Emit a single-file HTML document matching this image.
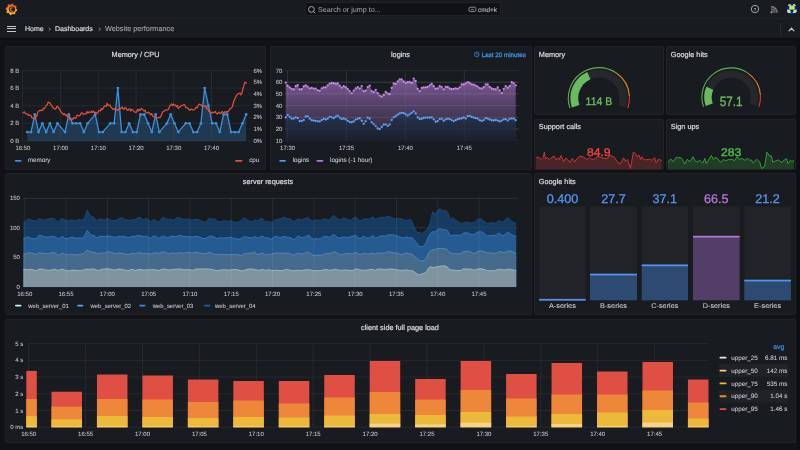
<!DOCTYPE html><html><head><meta charset="utf-8"><style>
*{margin:0;padding:0;box-sizing:border-box}
html,body{width:800px;height:450px;overflow:hidden;background:#111217;text-rendering:geometricPrecision;font-family:"Liberation Sans",sans-serif;color:#ccccdc}
.abs{position:absolute}
.panel{position:absolute;background:#181b1f;border:1px solid #202226;border-radius:2px}
.t{position:absolute;white-space:nowrap;line-height:1}
.ptitle{font-size:7px;color:#d8d9e0}
.ax{font-size:5.5px;color:#c0c1c8}
.lg{font-size:6px;color:#c8c9d0}
svg{position:absolute;left:0;top:0;overflow:visible;will-change:transform}
.t{will-change:transform}
</style></head><body><div class="abs" style="left:0;top:0;width:800px;height:19px;background:#181b1f;border-bottom:1px solid #202227"></div>
<div class="abs" style="left:0;top:19px;width:800px;height:20px;background:#181b1f;border-bottom:1px solid #0c0d10"></div>
<div class="abs" style="left:0;top:39px;width:800px;height:1px;background:#0e0f12"></div>
<svg width="24" height="19" viewBox="0 0 24 19" style="left:0;top:0">
<defs><linearGradient id="lg1" x1="0" y1="-5.5" x2="0" y2="5.5" gradientUnits="userSpaceOnUse"><stop offset="0" stop-color="#ef4a2a"/><stop offset="0.55" stop-color="#f7922a"/><stop offset="1" stop-color="#fcd114"/></linearGradient></defs>
<g transform="translate(11.5,9.4)" fill="url(#lg1)">
<circle r="4.9"/><circle cx="0.82" cy="-4.68" r="1.15"/><circle cx="3.89" cy="-2.72" r="1.15"/><circle cx="4.68" cy="0.82" r="1.15"/><circle cx="2.72" cy="3.89" r="1.15"/><circle cx="-0.82" cy="4.68" r="1.15"/><circle cx="-3.89" cy="2.72" r="1.15"/><circle cx="-4.68" cy="-0.82" r="1.15"/><circle cx="-2.72" cy="-3.89" r="1.15"/>
<circle cx="0.5" cy="0.2" r="3.0" fill="#1d1b1c"/>
<path d="M1.1,-1.4 A1.7,1.7 0 1 0 1.9,1.4" stroke="#ef7a2a" stroke-width="1.1" fill="none"/>
<circle cx="0.9" cy="0.3" r="0.75" fill="#141316"/>
</g></svg>
<div class="abs" style="left:7px;top:25.7px;width:9px;height:1px;background:#c8c9d0"></div>
<div class="abs" style="left:7px;top:28.2px;width:9px;height:1px;background:#c8c9d0"></div>
<div class="abs" style="left:7px;top:30.7px;width:9px;height:1px;background:#c8c9d0"></div>
<div class="t" style="left:25px;top:25.9px;font-size:7px;color:#d8d9e0;-webkit-text-stroke:0.2px #d8d9e0">Home</div>
<svg width="800" height="40"><path d="M48.6,27.8 L50.7,29.25 L48.6,30.7 M98.6,27.8 L100.7,29.25 L98.6,30.7" stroke="#8e8f96" stroke-width="0.8" fill="none"/></svg>
<div class="t" style="left:55.1px;top:25.9px;font-size:7px;color:#d8d9e0;-webkit-text-stroke:0.2px #d8d9e0">Dashboards</div>
<div class="t" style="left:105.3px;top:25.4px;font-size:7.3px;color:#a3a4ab;-webkit-text-stroke:0.1px #a3a4ab">Website performance</div>
<div class="abs" style="left:304.5px;top:1.9px;width:196.3px;height:14.4px;background:#111217;border:1px solid #1f2126;border-radius:2px"></div>
<svg width="10" height="10" style="left:307px;top:4.6px"><circle cx="4.4" cy="4.4" r="2.9" stroke="#b5b6bd" stroke-width="0.9" fill="none"/><path d="M6.5,6.5 L8.3,8.3" stroke="#b5b6bd" stroke-width="0.9"/></svg>
<div class="t" style="left:318px;top:6px;font-size:7.2px;color:#a8a9b0">Search or jump to...</div>
<svg width="10" height="8" style="left:467.5px;top:6px"><rect x="1" y="1.2" width="6.8" height="4.3" rx="1.3" stroke="#9a9ba2" stroke-width="0.9" fill="none"/><path d="M3,3.6 h2.8" stroke="#9a9ba2" stroke-width="0.8"/></svg>
<div class="t" style="left:477.6px;top:7.8px;font-size:6.4px;color:#b0b1b8;-webkit-text-stroke:0.15px #b0b1b8">cmd+k</div>
<svg width="12" height="12" style="left:749px;top:2.9px"><circle cx="6" cy="6" r="3.7" stroke="#b8b9c0" stroke-width="0.85" fill="none"/><text x="6" y="7.5" font-size="4.2" text-anchor="middle" fill="#b8b9c0" font-family="Liberation Sans" font-weight="bold">?</text></svg>
<svg width="12" height="12" style="left:768px;top:3px"><path d="M3,9.7 L3,2.8 A6.9,6.9 0 0 1 9.9,9.7 Z" fill="#6f7077"/><path d="M3,7 A2.7,2.7 0 0 1 5.7,9.7 M3,5 A4.7,4.7 0 0 1 7.7,9.7" stroke="#181b1f" stroke-width="0.7" fill="none"/><circle cx="3.3" cy="9.4" r="0.9" fill="#9a9ba2"/></svg>
<svg width="13" height="13" style="left:786.1px;top:2.9px"><defs><clipPath id="avc"><circle cx="5.9" cy="6.1" r="5.7"/></clipPath></defs><circle cx="5.9" cy="6.1" r="5.7" fill="#0a1f8c"/><g clip-path="url(#avc)" fill="#c8ec70"><rect x="1.9" y="0.6" width="2.7" height="2.2"/><rect x="7.2" y="0.6" width="2.7" height="2.2"/><rect x="3.3" y="2.5" width="5.3" height="4.1"/><rect x="1.1" y="6.6" width="3.1" height="3.1"/><rect x="7.6" y="6.6" width="3.1" height="3.1"/><rect x="2.4" y="8.5" width="2.5" height="1.5"/><rect x="6.8" y="8.5" width="2.5" height="1.5"/></g><rect x="4.9" y="3.6" width="2" height="2" fill="#b4d878"/></svg>
<div class="abs" style="left:780px;top:23px;width:1.2px;height:11.6px;background:#2a2c31"></div>
<svg width="10" height="8" style="left:786.5px;top:26px"><path d="M2.1,4.8 L4.5,2.2 L6.9,4.8" stroke="#c8c9d0" stroke-width="1.2" fill="none" stroke-linecap="round"/></svg>
<div class="panel" style="left:4.6px;top:45.6px;width:261.9px;height:124.4px"></div>
<div class="panel" style="left:269.5px;top:45.6px;width:262.1px;height:124.4px"></div>
<div class="panel" style="left:534.2px;top:45.6px;width:129.6px;height:69.9px"></div>
<div class="panel" style="left:666.4px;top:45.6px;width:129.6px;height:69.9px"></div>
<div class="panel" style="left:534.2px;top:118.5px;width:129.6px;height:51.5px"></div>
<div class="panel" style="left:666.4px;top:118.5px;width:129.6px;height:51.5px"></div>
<div class="panel" style="left:4.6px;top:172.6px;width:527px;height:142.9px"></div>
<div class="panel" style="left:534.2px;top:172.6px;width:261.8px;height:142.9px"></div>
<div class="panel" style="left:4.6px;top:318.6px;width:791.4px;height:124.4px"></div>
<div class="abs" style="left:797px;top:39px;width:3px;height:411px;background:#0e0f12"></div>
<svg width="800" height="450" font-family="Liberation Sans"><text x="135.5" y="56.5" font-size="7.3" fill="#d8d9e0" stroke="#d8d9e0" stroke-width="0.22" text-anchor="middle" font-weight="normal" >Memory / CPU</text><path d="M22.4,70.5 H247" stroke="#2b2d32" stroke-width="0.8"/><text x="19.3" y="72.5" font-size="6" fill="#bfc0c7" stroke="#bfc0c7" stroke-width="0.08" text-anchor="end" font-weight="normal" >8 B</text><path d="M22.4,88.1 H247" stroke="#2b2d32" stroke-width="0.8"/><text x="19.3" y="90.1" font-size="6" fill="#bfc0c7" stroke="#bfc0c7" stroke-width="0.08" text-anchor="end" font-weight="normal" >6 B</text><path d="M22.4,105.7 H247" stroke="#2b2d32" stroke-width="0.8"/><text x="19.3" y="107.7" font-size="6" fill="#bfc0c7" stroke="#bfc0c7" stroke-width="0.08" text-anchor="end" font-weight="normal" >4 B</text><path d="M22.4,123.3 H247" stroke="#2b2d32" stroke-width="0.8"/><text x="19.3" y="125.3" font-size="6" fill="#bfc0c7" stroke="#bfc0c7" stroke-width="0.08" text-anchor="end" font-weight="normal" >2 B</text><path d="M22.4,140.9 H247" stroke="#2b2d32" stroke-width="0.8"/><text x="19.3" y="142.9" font-size="6" fill="#bfc0c7" stroke="#bfc0c7" stroke-width="0.08" text-anchor="end" font-weight="normal" >0 B</text><text x="253.4" y="72.5" font-size="6" fill="#bfc0c7" stroke="#bfc0c7" stroke-width="0.08" text-anchor="start" font-weight="normal" >6%</text><path d="M248.4,70.5 H250.6" stroke="#2b2d32" stroke-width="0.8"/><text x="253.4" y="84.23" font-size="6" fill="#bfc0c7" stroke="#bfc0c7" stroke-width="0.08" text-anchor="start" font-weight="normal" >5%</text><path d="M248.4,82.23 H250.6" stroke="#2b2d32" stroke-width="0.8"/><text x="253.4" y="95.97" font-size="6" fill="#bfc0c7" stroke="#bfc0c7" stroke-width="0.08" text-anchor="start" font-weight="normal" >4%</text><path d="M248.4,93.97 H250.6" stroke="#2b2d32" stroke-width="0.8"/><text x="253.4" y="107.7" font-size="6" fill="#bfc0c7" stroke="#bfc0c7" stroke-width="0.08" text-anchor="start" font-weight="normal" >3%</text><path d="M248.4,105.7 H250.6" stroke="#2b2d32" stroke-width="0.8"/><text x="253.4" y="119.43" font-size="6" fill="#bfc0c7" stroke="#bfc0c7" stroke-width="0.08" text-anchor="start" font-weight="normal" >2%</text><path d="M248.4,117.43 H250.6" stroke="#2b2d32" stroke-width="0.8"/><text x="253.4" y="131.17" font-size="6" fill="#bfc0c7" stroke="#bfc0c7" stroke-width="0.08" text-anchor="start" font-weight="normal" >1%</text><path d="M248.4,129.17 H250.6" stroke="#2b2d32" stroke-width="0.8"/><text x="253.4" y="142.9" font-size="6" fill="#bfc0c7" stroke="#bfc0c7" stroke-width="0.08" text-anchor="start" font-weight="normal" >0%</text><path d="M248.4,140.9 H250.6" stroke="#2b2d32" stroke-width="0.8"/><text x="22.9" y="149.6" font-size="6" fill="#bfc0c7" stroke="#bfc0c7" stroke-width="0.08" text-anchor="middle" font-weight="normal" >16:50</text><path d="M60.62,70.5 V140.9" stroke="#2b2d32" stroke-width="0.8"/><text x="60.62" y="149.6" font-size="6" fill="#bfc0c7" stroke="#bfc0c7" stroke-width="0.08" text-anchor="middle" font-weight="normal" >17:00</text><path d="M98.34,70.5 V140.9" stroke="#2b2d32" stroke-width="0.8"/><text x="98.34" y="149.6" font-size="6" fill="#bfc0c7" stroke="#bfc0c7" stroke-width="0.08" text-anchor="middle" font-weight="normal" >17:10</text><path d="M136.06,70.5 V140.9" stroke="#2b2d32" stroke-width="0.8"/><text x="136.06" y="149.6" font-size="6" fill="#bfc0c7" stroke="#bfc0c7" stroke-width="0.08" text-anchor="middle" font-weight="normal" >17:20</text><path d="M173.78,70.5 V140.9" stroke="#2b2d32" stroke-width="0.8"/><text x="173.78" y="149.6" font-size="6" fill="#bfc0c7" stroke="#bfc0c7" stroke-width="0.08" text-anchor="middle" font-weight="normal" >17:30</text><path d="M211.5,70.5 V140.9" stroke="#2b2d32" stroke-width="0.8"/><text x="211.5" y="149.6" font-size="6" fill="#bfc0c7" stroke="#bfc0c7" stroke-width="0.08" text-anchor="middle" font-weight="normal" >17:40</text><path d="M22.4,70.5 V140.9" stroke="#2b2d32" stroke-width="0.8"/><path d="M27.25,132.1 L31.02,132.1 L34.8,114.5 L38.58,132.1 L42.35,123.3 L46.12,132.1 L49.9,123.3 L53.67,132.1 L57.45,123.3 L61.23,127.7 L65,132.1 L68.78,114.5 L72.55,123.3 L76.32,123.3 L80.1,123.3 L83.88,132.1 L87.65,123.3 L91.42,118.9 L95.2,114.5 L98.98,132.1 L102.75,132.1 L106.52,127.7 L110.3,123.3 L114.07,123.3 L117.85,88.1 L121.62,132.1 L125.4,132.1 L129.18,123.3 L132.95,132.1 L136.72,132.1 L140.5,114.5 L144.27,114.5 L148.05,123.3 L151.82,132.1 L155.6,114.5 L159.38,132.1 L163.15,127.7 L166.92,123.3 L170.7,114.5 L174.47,123.3 L178.25,132.1 L182.02,127.7 L185.8,123.3 L189.58,123.3 L193.35,132.1 L197.12,132.1 L200.9,123.3 L204.67,88.1 L208.45,105.7 L212.22,123.3 L216,123.3 L219.77,132.1 L223.55,114.5 L227.32,114.5 L231.1,132.1 L234.88,132.1 L238.65,132.1 L242.42,123.3 L246.2,114.5 L246.2,140.9 L27.25,140.9 Z" fill="#3b8fdb" fill-opacity="0.26"/><path d="M27.25,132.1 L31.02,132.1 L34.8,114.5 L38.58,132.1 L42.35,123.3 L46.12,132.1 L49.9,123.3 L53.67,132.1 L57.45,123.3 L61.23,127.7 L65,132.1 L68.78,114.5 L72.55,123.3 L76.32,123.3 L80.1,123.3 L83.88,132.1 L87.65,123.3 L91.42,118.9 L95.2,114.5 L98.98,132.1 L102.75,132.1 L106.52,127.7 L110.3,123.3 L114.07,123.3 L117.85,88.1 L121.62,132.1 L125.4,132.1 L129.18,123.3 L132.95,132.1 L136.72,132.1 L140.5,114.5 L144.27,114.5 L148.05,123.3 L151.82,132.1 L155.6,114.5 L159.38,132.1 L163.15,127.7 L166.92,123.3 L170.7,114.5 L174.47,123.3 L178.25,132.1 L182.02,127.7 L185.8,123.3 L189.58,123.3 L193.35,132.1 L197.12,132.1 L200.9,123.3 L204.67,88.1 L208.45,105.7 L212.22,123.3 L216,123.3 L219.77,132.1 L223.55,114.5 L227.32,114.5 L231.1,132.1 L234.88,132.1 L238.65,132.1 L242.42,123.3 L246.2,114.5" stroke="#3b8fdb" stroke-width="1.3" fill="none" stroke-linejoin="round"/><circle cx="27.25" cy="132.1" r="1.4" fill="#3b8fdb"/><circle cx="31.02" cy="132.1" r="1.4" fill="#3b8fdb"/><circle cx="34.8" cy="114.5" r="1.4" fill="#3b8fdb"/><circle cx="38.58" cy="132.1" r="1.4" fill="#3b8fdb"/><circle cx="42.35" cy="123.3" r="1.4" fill="#3b8fdb"/><circle cx="46.12" cy="132.1" r="1.4" fill="#3b8fdb"/><circle cx="49.9" cy="123.3" r="1.4" fill="#3b8fdb"/><circle cx="53.67" cy="132.1" r="1.4" fill="#3b8fdb"/><circle cx="57.45" cy="123.3" r="1.4" fill="#3b8fdb"/><circle cx="65" cy="132.1" r="1.4" fill="#3b8fdb"/><circle cx="68.78" cy="114.5" r="1.4" fill="#3b8fdb"/><circle cx="72.55" cy="123.3" r="1.4" fill="#3b8fdb"/><circle cx="76.32" cy="123.3" r="1.4" fill="#3b8fdb"/><circle cx="80.1" cy="123.3" r="1.4" fill="#3b8fdb"/><circle cx="83.88" cy="132.1" r="1.4" fill="#3b8fdb"/><circle cx="87.65" cy="123.3" r="1.4" fill="#3b8fdb"/><circle cx="95.2" cy="114.5" r="1.4" fill="#3b8fdb"/><circle cx="98.98" cy="132.1" r="1.4" fill="#3b8fdb"/><circle cx="102.75" cy="132.1" r="1.4" fill="#3b8fdb"/><circle cx="110.3" cy="123.3" r="1.4" fill="#3b8fdb"/><circle cx="114.07" cy="123.3" r="1.4" fill="#3b8fdb"/><circle cx="117.85" cy="88.1" r="1.4" fill="#3b8fdb"/><circle cx="121.62" cy="132.1" r="1.4" fill="#3b8fdb"/><circle cx="125.4" cy="132.1" r="1.4" fill="#3b8fdb"/><circle cx="129.18" cy="123.3" r="1.4" fill="#3b8fdb"/><circle cx="132.95" cy="132.1" r="1.4" fill="#3b8fdb"/><circle cx="136.72" cy="132.1" r="1.4" fill="#3b8fdb"/><circle cx="140.5" cy="114.5" r="1.4" fill="#3b8fdb"/><circle cx="144.27" cy="114.5" r="1.4" fill="#3b8fdb"/><circle cx="148.05" cy="123.3" r="1.4" fill="#3b8fdb"/><circle cx="151.82" cy="132.1" r="1.4" fill="#3b8fdb"/><circle cx="155.6" cy="114.5" r="1.4" fill="#3b8fdb"/><circle cx="159.38" cy="132.1" r="1.4" fill="#3b8fdb"/><circle cx="166.92" cy="123.3" r="1.4" fill="#3b8fdb"/><circle cx="170.7" cy="114.5" r="1.4" fill="#3b8fdb"/><circle cx="174.47" cy="123.3" r="1.4" fill="#3b8fdb"/><circle cx="178.25" cy="132.1" r="1.4" fill="#3b8fdb"/><circle cx="185.8" cy="123.3" r="1.4" fill="#3b8fdb"/><circle cx="189.58" cy="123.3" r="1.4" fill="#3b8fdb"/><circle cx="193.35" cy="132.1" r="1.4" fill="#3b8fdb"/><circle cx="197.12" cy="132.1" r="1.4" fill="#3b8fdb"/><circle cx="200.9" cy="123.3" r="1.4" fill="#3b8fdb"/><circle cx="204.67" cy="88.1" r="1.4" fill="#3b8fdb"/><circle cx="208.45" cy="105.7" r="1.4" fill="#3b8fdb"/><circle cx="212.22" cy="123.3" r="1.4" fill="#3b8fdb"/><circle cx="216" cy="123.3" r="1.4" fill="#3b8fdb"/><circle cx="219.77" cy="132.1" r="1.4" fill="#3b8fdb"/><circle cx="223.55" cy="114.5" r="1.4" fill="#3b8fdb"/><circle cx="227.32" cy="114.5" r="1.4" fill="#3b8fdb"/><circle cx="231.1" cy="132.1" r="1.4" fill="#3b8fdb"/><circle cx="234.88" cy="132.1" r="1.4" fill="#3b8fdb"/><circle cx="238.65" cy="132.1" r="1.4" fill="#3b8fdb"/><circle cx="242.42" cy="123.3" r="1.4" fill="#3b8fdb"/><circle cx="246.2" cy="114.5" r="1.4" fill="#3b8fdb"/><path d="M22.5,112.76 L23.45,112.73 L24.4,111.97 L25.35,113.54 L26.3,113.69 L27.25,113.79 L28.2,115.39 L29.15,114.93 L30.1,115.23 L31.05,115.45 L32,118.11 L32.95,118.2 L33.9,119.49 L34.85,117.57 L35.8,116.37 L36.75,116.68 L37.7,112.5 L38.65,111.02 L39.6,110.72 L40.55,110.12 L41.5,110.71 L42.45,110.4 L43.4,108.25 L44.35,108.7 L45.3,106.99 L46.25,105.5 L47.2,104.75 L48.15,102.19 L49.1,102.58 L50.05,102.75 L51,104.96 L51.95,105.92 L52.9,107.62 L53.85,108.46 L54.8,108.82 L55.75,109.02 L56.7,106.7 L57.65,106.47 L58.6,107.85 L59.55,109.18 L60.5,111.23 L61.45,112.42 L62.4,113.21 L63.35,114.77 L64.3,113.59 L65.25,115.31 L66.2,114.73 L67.15,116.71 L68.1,115.78 L69.05,116.78 L70,119.84 L70.95,119.93 L71.9,118.64 L72.85,119.57 L73.8,117.37 L74.75,118.24 L75.7,118.39 L76.65,116.06 L77.6,114.87 L78.55,115.65 L79.5,115.85 L80.45,114.84 L81.4,112.75 L82.35,113.01 L83.3,114.5 L84.25,113.82 L85.2,113.91 L86.15,113.79 L87.1,111.56 L88.05,113.15 L89,111.93 L89.95,112.09 L90.9,112.66 L91.85,110.98 L92.8,112.52 L93.75,111.22 L94.7,112.94 L95.65,112.31 L96.6,113.12 L97.55,113.19 L98.5,110.77 L99.45,110.41 L100.4,110.99 L101.35,108.52 L102.3,109.59 L103.25,108.24 L104.2,106.12 L105.15,105.89 L106.1,106.58 L107.05,103.25 L108,105.09 L108.95,105.7 L109.9,104.98 L110.85,106.95 L111.8,107.77 L112.75,109.09 L113.7,109.49 L114.65,108.56 L115.6,109.97 L116.55,109.42 L117.5,110.52 L118.45,109.84 L119.4,107.96 L120.35,108.84 L121.3,108.13 L122.25,106.85 L123.2,108.94 L124.15,109.31 L125.1,107.47 L126.05,108.01 L127,109.89 L127.95,110.34 L128.9,109.08 L129.85,108.79 L130.8,111.17 L131.75,109.33 L132.7,109.81 L133.65,110.87 L134.6,111.67 L135.55,112.38 L136.5,112.24 L137.45,109.32 L138.4,111.04 L139.35,109.4 L140.3,110.34 L141.25,108.43 L142.2,108.75 L143.15,110.13 L144.1,111.1 L145.05,110.2 L146,112.66 L146.95,112.85 L147.9,112.55 L148.85,112.35 L149.8,113.63 L150.75,114.96 L151.7,113.55 L152.65,115.94 L153.6,116.85 L154.55,116.52 L155.5,116.41 L156.45,117.83 L157.4,117.81 L158.35,117.58 L159.3,117.31 L160.25,117.53 L161.2,115.7 L162.15,113.03 L163.1,111.59 L164.05,111.32 L165,110.31 L165.95,109.79 L166.9,110.23 L167.85,109.71 L168.8,108.94 L169.75,105.61 L170.7,105.38 L171.65,103.83 L172.6,105.66 L173.55,104.07 L174.5,105.09 L175.45,104.98 L176.4,106.72 L177.35,105.39 L178.3,108.58 L179.25,107.56 L180.2,106.54 L181.15,105.6 L182.1,105.59 L183.05,105.2 L184,104.62 L184.95,105.21 L185.9,107.73 L186.85,107.72 L187.8,108.05 L188.75,109.06 L189.7,110.39 L190.65,109.34 L191.6,109.14 L192.55,109.95 L193.5,109.81 L194.45,109.75 L195.4,108.26 L196.35,107.25 L197.3,107.81 L198.25,105.3 L199.2,104.06 L200.15,104.53 L201.1,105.11 L202.05,106.22 L203,105.39 L203.95,105.98 L204.9,106.53 L205.85,105.56 L206.8,108.81 L207.75,108.12 L208.7,111.33 L209.65,110.91 L210.6,112.43 L211.55,113.38 L212.5,112.06 L213.45,112.63 L214.4,112.3 L215.35,111.44 L216.3,113.31 L217.25,114 L218.2,113.18 L219.15,112.12 L220.1,113.46 L221.05,113.55 L222,111.48 L222.95,112.17 L223.9,112.79 L224.85,111.52 L225.8,112.93 L226.75,111.41 L227.7,112.16 L228.65,110.94 L229.6,109.32 L230.55,108.44 L231.5,107.97 L232.45,106.4 L233.4,102.59 L234.35,100.09 L235.3,97.63 L236.25,96.01 L237.2,94.45 L238.15,93.81 L239.1,93.72 L240.05,93.05 L241,94.95 L241.95,93.17 L242.9,88.79 L243.85,85.69 L244.8,82.27 L245.75,82.43 L246.7,83.7" stroke="#e0503c" stroke-width="1.25" fill="none" stroke-linejoin="round"/><rect x="14.8" y="160" width="6.8" height="1.8" rx="0.8" fill="#3b8fdb"/><text x="27.7" y="162.3" font-size="6.3" fill="#c8c9d0" stroke="#c8c9d0" stroke-width="0.08" text-anchor="start" font-weight="normal" >memory</text><rect x="235.2" y="160" width="7.2" height="1.8" rx="0.8" fill="#e0503c"/><text x="249.2" y="162.3" font-size="6.3" fill="#c8c9d0" stroke="#c8c9d0" stroke-width="0.08" text-anchor="start" font-weight="normal" >cpu</text></svg>
<svg width="800" height="450" font-family="Liberation Sans"><text x="400.5" y="56.5" font-size="7.3" fill="#d8d9e0" stroke="#d8d9e0" stroke-width="0.22" text-anchor="middle" font-weight="normal" >logins</text><circle cx="476.8" cy="54.4" r="2.3" stroke="#3d8fd8" stroke-width="0.8" fill="none"/><path d="M476.8,53.2 V54.5 H477.8" stroke="#3d8fd8" stroke-width="0.6" fill="none"/><text x="481.7" y="56.7" font-size="6.3" fill="#3d92e0" stroke="#3d92e0" stroke-width="0.3" text-anchor="start" font-weight="normal" textLength="44.2" lengthAdjust="spacingAndGlyphs">Last 20 minutes</text><path d="M285.2,70.5 H518.6" stroke="#2b2d32" stroke-width="0.8"/><text x="282.4" y="72.6" font-size="6" fill="#bfc0c7" stroke="#bfc0c7" stroke-width="0.08" text-anchor="end" font-weight="normal" >70</text><path d="M285.2,82.2 H518.6" stroke="#2b2d32" stroke-width="0.8"/><text x="282.4" y="84.3" font-size="6" fill="#bfc0c7" stroke="#bfc0c7" stroke-width="0.08" text-anchor="end" font-weight="normal" >60</text><path d="M285.2,93.9 H518.6" stroke="#2b2d32" stroke-width="0.8"/><text x="282.4" y="96" font-size="6" fill="#bfc0c7" stroke="#bfc0c7" stroke-width="0.08" text-anchor="end" font-weight="normal" >50</text><path d="M285.2,105.6 H518.6" stroke="#2b2d32" stroke-width="0.8"/><text x="282.4" y="107.7" font-size="6" fill="#bfc0c7" stroke="#bfc0c7" stroke-width="0.08" text-anchor="end" font-weight="normal" >40</text><path d="M285.2,117.3 H518.6" stroke="#2b2d32" stroke-width="0.8"/><text x="282.4" y="119.4" font-size="6" fill="#bfc0c7" stroke="#bfc0c7" stroke-width="0.08" text-anchor="end" font-weight="normal" >30</text><path d="M285.2,129 H518.6" stroke="#2b2d32" stroke-width="0.8"/><text x="282.4" y="131.1" font-size="6" fill="#bfc0c7" stroke="#bfc0c7" stroke-width="0.08" text-anchor="end" font-weight="normal" >20</text><path d="M285.2,140.7 H518.6" stroke="#2b2d32" stroke-width="0.8"/><text x="282.4" y="142.8" font-size="6" fill="#bfc0c7" stroke="#bfc0c7" stroke-width="0.08" text-anchor="end" font-weight="normal" >10</text><path d="M287.6,70.5 V140.7" stroke="#2b2d32" stroke-width="0.8"/><text x="287.6" y="149.5" font-size="6" fill="#bfc0c7" stroke="#bfc0c7" stroke-width="0.08" text-anchor="middle" font-weight="normal" >17:30</text><path d="M346.5,70.5 V140.7" stroke="#2b2d32" stroke-width="0.8"/><text x="346.5" y="149.5" font-size="6" fill="#bfc0c7" stroke="#bfc0c7" stroke-width="0.08" text-anchor="middle" font-weight="normal" >17:35</text><path d="M405.4,70.5 V140.7" stroke="#2b2d32" stroke-width="0.8"/><text x="405.4" y="149.5" font-size="6" fill="#bfc0c7" stroke="#bfc0c7" stroke-width="0.08" text-anchor="middle" font-weight="normal" >17:40</text><path d="M464.3,70.5 V140.7" stroke="#2b2d32" stroke-width="0.8"/><text x="464.3" y="149.5" font-size="6" fill="#bfc0c7" stroke="#bfc0c7" stroke-width="0.08" text-anchor="middle" font-weight="normal" >17:45</text><defs><linearGradient id="gp" x1="0" y1="70" x2="0" y2="141" gradientUnits="userSpaceOnUse"><stop offset="0" stop-color="#8a62a6"/><stop offset="0.5" stop-color="#523f66"/><stop offset="1" stop-color="#2a2532"/></linearGradient><linearGradient id="gb" x1="0" y1="95" x2="0" y2="141" gradientUnits="userSpaceOnUse"><stop offset="0" stop-color="#304268"/><stop offset="1" stop-color="#1a1f2c"/></linearGradient></defs><path d="M285.7,82.57 L287.7,85.76 L289.7,87.48 L291.7,88.94 L293.7,89.43 L295.7,86.14 L297.7,85.25 L299.7,89.43 L301.7,89.23 L303.7,86.5 L305.7,85.3 L307.7,86.55 L309.7,88.42 L311.7,87.85 L313.7,88.6 L315.7,88.56 L317.7,90.29 L319.7,90.78 L321.7,88.28 L323.7,87.45 L325.7,87.3 L327.7,85.43 L329.7,83.56 L331.7,83.01 L333.7,83.23 L335.7,83.66 L337.7,83.51 L339.7,85.55 L341.7,87.7 L343.7,86.13 L345.7,87.25 L347.7,89 L349.7,91.16 L351.7,93.29 L353.7,90.65 L355.7,88.44 L357.7,87.09 L359.7,88.57 L361.7,86.05 L363.7,91.19 L365.7,90.65 L367.7,87.08 L369.7,85.71 L371.7,91.27 L373.7,92.23 L375.7,89.96 L377.7,93.16 L379.7,95.55 L381.7,96.54 L383.7,94.98 L385.7,91.97 L387.7,93.43 L389.7,94.26 L391.7,88 L393.7,83.52 L395.7,83.8 L397.7,81.43 L399.7,79.38 L401.7,79.41 L403.7,81.45 L405.7,82.82 L407.7,82 L409.7,82 L411.7,82.97 L413.7,78.61 L415.7,80.9 L417.7,88.85 L419.7,91.17 L421.7,87.98 L423.7,87.38 L425.7,87.38 L427.7,86.81 L429.7,85.42 L431.7,84.02 L433.7,86.26 L435.7,88.73 L437.7,88.4 L439.7,86.17 L441.7,87.07 L443.7,89.44 L445.7,86.95 L447.7,86.92 L449.7,88.52 L451.7,89.27 L453.7,88.87 L455.7,88.28 L457.7,88.85 L459.7,87.3 L461.7,84.45 L463.7,84.39 L465.7,83.39 L467.7,82.05 L469.7,83.01 L471.7,84.45 L473.7,84.62 L475.7,85.62 L477.7,86.62 L479.7,88.06 L481.7,88.55 L483.7,87.26 L485.7,84.45 L487.7,84.45 L489.7,86.98 L491.7,88.49 L493.7,89.17 L495.7,89.48 L497.7,87.48 L499.7,90.43 L501.7,93.12 L503.7,88.87 L505.7,86.03 L507.7,87.73 L509.7,86.18 L511.7,82.11 L513.7,83.11 L515.7,85.43 L515.7,140.7 L285.7,140.7 Z" fill="url(#gp)"/><path d="M285.2,82.2 H518.6" stroke="#ffffff" stroke-opacity="0.09" stroke-width="0.8"/><path d="M285.2,93.9 H518.6" stroke="#ffffff" stroke-opacity="0.09" stroke-width="0.8"/><path d="M285.2,105.6 H518.6" stroke="#ffffff" stroke-opacity="0.09" stroke-width="0.8"/><path d="M285.2,117.3 H518.6" stroke="#ffffff" stroke-opacity="0.09" stroke-width="0.8"/><path d="M285.2,129 H518.6" stroke="#ffffff" stroke-opacity="0.09" stroke-width="0.8"/><path d="M285.7,117.4 L287.7,115.1 L289.7,116.86 L291.7,118.68 L293.7,118.54 L295.7,117.46 L297.7,118.06 L299.7,121.12 L301.7,121.12 L303.7,120.11 L305.7,116.48 L307.7,116.42 L309.7,118.7 L311.7,120.14 L313.7,120.64 L315.7,120.81 L317.7,121.31 L319.7,121.41 L321.7,120.07 L323.7,118.9 L325.7,119.52 L327.7,118.68 L329.7,116.82 L331.7,117.3 L333.7,118.19 L335.7,116.75 L337.7,115.75 L339.7,117.6 L341.7,119 L343.7,118.5 L345.7,119.39 L347.7,120.78 L349.7,122.04 L351.7,122.35 L353.7,121.38 L355.7,119.53 L357.7,118.76 L359.7,118.26 L361.7,120.77 L363.7,123.78 L365.7,121.33 L367.7,117.65 L369.7,118.64 L371.7,122.33 L373.7,124.09 L375.7,126.11 L377.7,128.5 L379.7,129.03 L381.7,126.98 L383.7,124.7 L385.7,124.36 L387.7,125.93 L389.7,124.58 L391.7,119.94 L393.7,117.28 L395.7,116.27 L397.7,114.68 L399.7,113.48 L401.7,112.79 L403.7,113.2 L405.7,114.44 L407.7,115.53 L409.7,114.33 L411.7,112.93 L413.7,111.28 L415.7,113.51 L417.7,117.41 L419.7,118.99 L421.7,118.76 L423.7,118 L425.7,117.58 L427.7,117.54 L429.7,117.66 L431.7,117.47 L433.7,119.37 L435.7,121.74 L437.7,121.03 L439.7,119.08 L441.7,118.68 L443.7,120.73 L445.7,119.43 L447.7,118.68 L449.7,119.08 L451.7,120.08 L453.7,121.08 L455.7,120.17 L457.7,119.17 L459.7,118.68 L461.7,118.39 L463.7,117.52 L465.7,118.53 L467.7,116.15 L469.7,115.88 L471.7,116.96 L473.7,117.56 L475.7,118.16 L477.7,118.57 L479.7,120.14 L481.7,120.92 L483.7,120.07 L485.7,118.22 L487.7,118.62 L489.7,119.52 L491.7,120.27 L493.7,120.4 L495.7,120.01 L497.7,120.61 L499.7,121.4 L501.7,120.59 L503.7,119.4 L505.7,119.14 L507.7,120.54 L509.7,118.94 L511.7,118.34 L513.7,118.68 L515.7,120.2 L515.7,140.7 L285.7,140.7 Z" fill="url(#gb)"/><path d="M285.2,82.2 H518.6" stroke="#ffffff" stroke-opacity="0.05" stroke-width="0.8"/><path d="M285.2,93.9 H518.6" stroke="#ffffff" stroke-opacity="0.05" stroke-width="0.8"/><path d="M285.2,105.6 H518.6" stroke="#ffffff" stroke-opacity="0.05" stroke-width="0.8"/><path d="M285.2,117.3 H518.6" stroke="#ffffff" stroke-opacity="0.05" stroke-width="0.8"/><path d="M285.2,129 H518.6" stroke="#ffffff" stroke-opacity="0.05" stroke-width="0.8"/><path d="M287.6,70.5 V140.7" stroke="#ffffff" stroke-opacity="0.06" stroke-width="0.8"/><path d="M346.5,70.5 V140.7" stroke="#ffffff" stroke-opacity="0.06" stroke-width="0.8"/><path d="M405.4,70.5 V140.7" stroke="#ffffff" stroke-opacity="0.06" stroke-width="0.8"/><path d="M464.3,70.5 V140.7" stroke="#ffffff" stroke-opacity="0.06" stroke-width="0.8"/><path d="M285.7,82.57 L287.7,85.76 L289.7,87.48 L291.7,88.94 L293.7,89.43 L295.7,86.14 L297.7,85.25 L299.7,89.43 L301.7,89.23 L303.7,86.5 L305.7,85.3 L307.7,86.55 L309.7,88.42 L311.7,87.85 L313.7,88.6 L315.7,88.56 L317.7,90.29 L319.7,90.78 L321.7,88.28 L323.7,87.45 L325.7,87.3 L327.7,85.43 L329.7,83.56 L331.7,83.01 L333.7,83.23 L335.7,83.66 L337.7,83.51 L339.7,85.55 L341.7,87.7 L343.7,86.13 L345.7,87.25 L347.7,89 L349.7,91.16 L351.7,93.29 L353.7,90.65 L355.7,88.44 L357.7,87.09 L359.7,88.57 L361.7,86.05 L363.7,91.19 L365.7,90.65 L367.7,87.08 L369.7,85.71 L371.7,91.27 L373.7,92.23 L375.7,89.96 L377.7,93.16 L379.7,95.55 L381.7,96.54 L383.7,94.98 L385.7,91.97 L387.7,93.43 L389.7,94.26 L391.7,88 L393.7,83.52 L395.7,83.8 L397.7,81.43 L399.7,79.38 L401.7,79.41 L403.7,81.45 L405.7,82.82 L407.7,82 L409.7,82 L411.7,82.97 L413.7,78.61 L415.7,80.9 L417.7,88.85 L419.7,91.17 L421.7,87.98 L423.7,87.38 L425.7,87.38 L427.7,86.81 L429.7,85.42 L431.7,84.02 L433.7,86.26 L435.7,88.73 L437.7,88.4 L439.7,86.17 L441.7,87.07 L443.7,89.44 L445.7,86.95 L447.7,86.92 L449.7,88.52 L451.7,89.27 L453.7,88.87 L455.7,88.28 L457.7,88.85 L459.7,87.3 L461.7,84.45 L463.7,84.39 L465.7,83.39 L467.7,82.05 L469.7,83.01 L471.7,84.45 L473.7,84.62 L475.7,85.62 L477.7,86.62 L479.7,88.06 L481.7,88.55 L483.7,87.26 L485.7,84.45 L487.7,84.45 L489.7,86.98 L491.7,88.49 L493.7,89.17 L495.7,89.48 L497.7,87.48 L499.7,90.43 L501.7,93.12 L503.7,88.87 L505.7,86.03 L507.7,87.73 L509.7,86.18 L511.7,82.11 L513.7,83.11 L515.7,85.43" stroke="#b877d9" stroke-width="0.4" stroke-opacity="0.6" fill="none"/><path d="M285.7,117.4 L287.7,115.1 L289.7,116.86 L291.7,118.68 L293.7,118.54 L295.7,117.46 L297.7,118.06 L299.7,121.12 L301.7,121.12 L303.7,120.11 L305.7,116.48 L307.7,116.42 L309.7,118.7 L311.7,120.14 L313.7,120.64 L315.7,120.81 L317.7,121.31 L319.7,121.41 L321.7,120.07 L323.7,118.9 L325.7,119.52 L327.7,118.68 L329.7,116.82 L331.7,117.3 L333.7,118.19 L335.7,116.75 L337.7,115.75 L339.7,117.6 L341.7,119 L343.7,118.5 L345.7,119.39 L347.7,120.78 L349.7,122.04 L351.7,122.35 L353.7,121.38 L355.7,119.53 L357.7,118.76 L359.7,118.26 L361.7,120.77 L363.7,123.78 L365.7,121.33 L367.7,117.65 L369.7,118.64 L371.7,122.33 L373.7,124.09 L375.7,126.11 L377.7,128.5 L379.7,129.03 L381.7,126.98 L383.7,124.7 L385.7,124.36 L387.7,125.93 L389.7,124.58 L391.7,119.94 L393.7,117.28 L395.7,116.27 L397.7,114.68 L399.7,113.48 L401.7,112.79 L403.7,113.2 L405.7,114.44 L407.7,115.53 L409.7,114.33 L411.7,112.93 L413.7,111.28 L415.7,113.51 L417.7,117.41 L419.7,118.99 L421.7,118.76 L423.7,118 L425.7,117.58 L427.7,117.54 L429.7,117.66 L431.7,117.47 L433.7,119.37 L435.7,121.74 L437.7,121.03 L439.7,119.08 L441.7,118.68 L443.7,120.73 L445.7,119.43 L447.7,118.68 L449.7,119.08 L451.7,120.08 L453.7,121.08 L455.7,120.17 L457.7,119.17 L459.7,118.68 L461.7,118.39 L463.7,117.52 L465.7,118.53 L467.7,116.15 L469.7,115.88 L471.7,116.96 L473.7,117.56 L475.7,118.16 L477.7,118.57 L479.7,120.14 L481.7,120.92 L483.7,120.07 L485.7,118.22 L487.7,118.62 L489.7,119.52 L491.7,120.27 L493.7,120.4 L495.7,120.01 L497.7,120.61 L499.7,121.4 L501.7,120.59 L503.7,119.4 L505.7,119.14 L507.7,120.54 L509.7,118.94 L511.7,118.34 L513.7,118.68 L515.7,120.2" stroke="#5794f2" stroke-width="0.4" stroke-opacity="0.6" fill="none"/><circle cx="285.7" cy="82.57" r="1.15" fill="#c58ae2"/><circle cx="287.7" cy="85.76" r="1.15" fill="#c58ae2"/><circle cx="289.7" cy="87.48" r="1.15" fill="#c58ae2"/><circle cx="291.7" cy="88.94" r="1.15" fill="#c58ae2"/><circle cx="293.7" cy="89.43" r="1.15" fill="#c58ae2"/><circle cx="295.7" cy="86.14" r="1.15" fill="#c58ae2"/><circle cx="297.7" cy="85.25" r="1.15" fill="#c58ae2"/><circle cx="299.7" cy="89.43" r="1.15" fill="#c58ae2"/><circle cx="301.7" cy="89.23" r="1.15" fill="#c58ae2"/><circle cx="303.7" cy="86.5" r="1.15" fill="#c58ae2"/><circle cx="305.7" cy="85.3" r="1.15" fill="#c58ae2"/><circle cx="307.7" cy="86.55" r="1.15" fill="#c58ae2"/><circle cx="309.7" cy="88.42" r="1.15" fill="#c58ae2"/><circle cx="311.7" cy="87.85" r="1.15" fill="#c58ae2"/><circle cx="313.7" cy="88.6" r="1.15" fill="#c58ae2"/><circle cx="315.7" cy="88.56" r="1.15" fill="#c58ae2"/><circle cx="317.7" cy="90.29" r="1.15" fill="#c58ae2"/><circle cx="319.7" cy="90.78" r="1.15" fill="#c58ae2"/><circle cx="321.7" cy="88.28" r="1.15" fill="#c58ae2"/><circle cx="323.7" cy="87.45" r="1.15" fill="#c58ae2"/><circle cx="325.7" cy="87.3" r="1.15" fill="#c58ae2"/><circle cx="327.7" cy="85.43" r="1.15" fill="#c58ae2"/><circle cx="329.7" cy="83.56" r="1.15" fill="#c58ae2"/><circle cx="331.7" cy="83.01" r="1.15" fill="#c58ae2"/><circle cx="333.7" cy="83.23" r="1.15" fill="#c58ae2"/><circle cx="335.7" cy="83.66" r="1.15" fill="#c58ae2"/><circle cx="337.7" cy="83.51" r="1.15" fill="#c58ae2"/><circle cx="339.7" cy="85.55" r="1.15" fill="#c58ae2"/><circle cx="341.7" cy="87.7" r="1.15" fill="#c58ae2"/><circle cx="343.7" cy="86.13" r="1.15" fill="#c58ae2"/><circle cx="345.7" cy="87.25" r="1.15" fill="#c58ae2"/><circle cx="347.7" cy="89" r="1.15" fill="#c58ae2"/><circle cx="349.7" cy="91.16" r="1.15" fill="#c58ae2"/><circle cx="351.7" cy="93.29" r="1.15" fill="#c58ae2"/><circle cx="353.7" cy="90.65" r="1.15" fill="#c58ae2"/><circle cx="355.7" cy="88.44" r="1.15" fill="#c58ae2"/><circle cx="357.7" cy="87.09" r="1.15" fill="#c58ae2"/><circle cx="359.7" cy="88.57" r="1.15" fill="#c58ae2"/><circle cx="361.7" cy="86.05" r="1.15" fill="#c58ae2"/><circle cx="363.7" cy="91.19" r="1.15" fill="#c58ae2"/><circle cx="365.7" cy="90.65" r="1.15" fill="#c58ae2"/><circle cx="367.7" cy="87.08" r="1.15" fill="#c58ae2"/><circle cx="369.7" cy="85.71" r="1.15" fill="#c58ae2"/><circle cx="371.7" cy="91.27" r="1.15" fill="#c58ae2"/><circle cx="373.7" cy="92.23" r="1.15" fill="#c58ae2"/><circle cx="375.7" cy="89.96" r="1.15" fill="#c58ae2"/><circle cx="377.7" cy="93.16" r="1.15" fill="#c58ae2"/><circle cx="379.7" cy="95.55" r="1.15" fill="#c58ae2"/><circle cx="381.7" cy="96.54" r="1.15" fill="#c58ae2"/><circle cx="383.7" cy="94.98" r="1.15" fill="#c58ae2"/><circle cx="385.7" cy="91.97" r="1.15" fill="#c58ae2"/><circle cx="387.7" cy="93.43" r="1.15" fill="#c58ae2"/><circle cx="389.7" cy="94.26" r="1.15" fill="#c58ae2"/><circle cx="391.7" cy="88" r="1.15" fill="#c58ae2"/><circle cx="393.7" cy="83.52" r="1.15" fill="#c58ae2"/><circle cx="395.7" cy="83.8" r="1.15" fill="#c58ae2"/><circle cx="397.7" cy="81.43" r="1.15" fill="#c58ae2"/><circle cx="399.7" cy="79.38" r="1.15" fill="#c58ae2"/><circle cx="401.7" cy="79.41" r="1.15" fill="#c58ae2"/><circle cx="403.7" cy="81.45" r="1.15" fill="#c58ae2"/><circle cx="405.7" cy="82.82" r="1.15" fill="#c58ae2"/><circle cx="407.7" cy="82" r="1.15" fill="#c58ae2"/><circle cx="409.7" cy="82" r="1.15" fill="#c58ae2"/><circle cx="411.7" cy="82.97" r="1.15" fill="#c58ae2"/><circle cx="413.7" cy="78.61" r="1.15" fill="#c58ae2"/><circle cx="415.7" cy="80.9" r="1.15" fill="#c58ae2"/><circle cx="417.7" cy="88.85" r="1.15" fill="#c58ae2"/><circle cx="419.7" cy="91.17" r="1.15" fill="#c58ae2"/><circle cx="421.7" cy="87.98" r="1.15" fill="#c58ae2"/><circle cx="423.7" cy="87.38" r="1.15" fill="#c58ae2"/><circle cx="425.7" cy="87.38" r="1.15" fill="#c58ae2"/><circle cx="427.7" cy="86.81" r="1.15" fill="#c58ae2"/><circle cx="429.7" cy="85.42" r="1.15" fill="#c58ae2"/><circle cx="431.7" cy="84.02" r="1.15" fill="#c58ae2"/><circle cx="433.7" cy="86.26" r="1.15" fill="#c58ae2"/><circle cx="435.7" cy="88.73" r="1.15" fill="#c58ae2"/><circle cx="437.7" cy="88.4" r="1.15" fill="#c58ae2"/><circle cx="439.7" cy="86.17" r="1.15" fill="#c58ae2"/><circle cx="441.7" cy="87.07" r="1.15" fill="#c58ae2"/><circle cx="443.7" cy="89.44" r="1.15" fill="#c58ae2"/><circle cx="445.7" cy="86.95" r="1.15" fill="#c58ae2"/><circle cx="447.7" cy="86.92" r="1.15" fill="#c58ae2"/><circle cx="449.7" cy="88.52" r="1.15" fill="#c58ae2"/><circle cx="451.7" cy="89.27" r="1.15" fill="#c58ae2"/><circle cx="453.7" cy="88.87" r="1.15" fill="#c58ae2"/><circle cx="455.7" cy="88.28" r="1.15" fill="#c58ae2"/><circle cx="457.7" cy="88.85" r="1.15" fill="#c58ae2"/><circle cx="459.7" cy="87.3" r="1.15" fill="#c58ae2"/><circle cx="461.7" cy="84.45" r="1.15" fill="#c58ae2"/><circle cx="463.7" cy="84.39" r="1.15" fill="#c58ae2"/><circle cx="465.7" cy="83.39" r="1.15" fill="#c58ae2"/><circle cx="467.7" cy="82.05" r="1.15" fill="#c58ae2"/><circle cx="469.7" cy="83.01" r="1.15" fill="#c58ae2"/><circle cx="471.7" cy="84.45" r="1.15" fill="#c58ae2"/><circle cx="473.7" cy="84.62" r="1.15" fill="#c58ae2"/><circle cx="475.7" cy="85.62" r="1.15" fill="#c58ae2"/><circle cx="477.7" cy="86.62" r="1.15" fill="#c58ae2"/><circle cx="479.7" cy="88.06" r="1.15" fill="#c58ae2"/><circle cx="481.7" cy="88.55" r="1.15" fill="#c58ae2"/><circle cx="483.7" cy="87.26" r="1.15" fill="#c58ae2"/><circle cx="485.7" cy="84.45" r="1.15" fill="#c58ae2"/><circle cx="487.7" cy="84.45" r="1.15" fill="#c58ae2"/><circle cx="489.7" cy="86.98" r="1.15" fill="#c58ae2"/><circle cx="491.7" cy="88.49" r="1.15" fill="#c58ae2"/><circle cx="493.7" cy="89.17" r="1.15" fill="#c58ae2"/><circle cx="495.7" cy="89.48" r="1.15" fill="#c58ae2"/><circle cx="497.7" cy="87.48" r="1.15" fill="#c58ae2"/><circle cx="499.7" cy="90.43" r="1.15" fill="#c58ae2"/><circle cx="501.7" cy="93.12" r="1.15" fill="#c58ae2"/><circle cx="503.7" cy="88.87" r="1.15" fill="#c58ae2"/><circle cx="505.7" cy="86.03" r="1.15" fill="#c58ae2"/><circle cx="507.7" cy="87.73" r="1.15" fill="#c58ae2"/><circle cx="509.7" cy="86.18" r="1.15" fill="#c58ae2"/><circle cx="511.7" cy="82.11" r="1.15" fill="#c58ae2"/><circle cx="513.7" cy="83.11" r="1.15" fill="#c58ae2"/><circle cx="515.7" cy="85.43" r="1.15" fill="#c58ae2"/><circle cx="285.7" cy="117.4" r="1.15" fill="#639ef5"/><circle cx="287.7" cy="115.1" r="1.15" fill="#639ef5"/><circle cx="289.7" cy="116.86" r="1.15" fill="#639ef5"/><circle cx="291.7" cy="118.68" r="1.15" fill="#639ef5"/><circle cx="293.7" cy="118.54" r="1.15" fill="#639ef5"/><circle cx="295.7" cy="117.46" r="1.15" fill="#639ef5"/><circle cx="297.7" cy="118.06" r="1.15" fill="#639ef5"/><circle cx="299.7" cy="121.12" r="1.15" fill="#639ef5"/><circle cx="301.7" cy="121.12" r="1.15" fill="#639ef5"/><circle cx="303.7" cy="120.11" r="1.15" fill="#639ef5"/><circle cx="305.7" cy="116.48" r="1.15" fill="#639ef5"/><circle cx="307.7" cy="116.42" r="1.15" fill="#639ef5"/><circle cx="309.7" cy="118.7" r="1.15" fill="#639ef5"/><circle cx="311.7" cy="120.14" r="1.15" fill="#639ef5"/><circle cx="313.7" cy="120.64" r="1.15" fill="#639ef5"/><circle cx="315.7" cy="120.81" r="1.15" fill="#639ef5"/><circle cx="317.7" cy="121.31" r="1.15" fill="#639ef5"/><circle cx="319.7" cy="121.41" r="1.15" fill="#639ef5"/><circle cx="321.7" cy="120.07" r="1.15" fill="#639ef5"/><circle cx="323.7" cy="118.9" r="1.15" fill="#639ef5"/><circle cx="325.7" cy="119.52" r="1.15" fill="#639ef5"/><circle cx="327.7" cy="118.68" r="1.15" fill="#639ef5"/><circle cx="329.7" cy="116.82" r="1.15" fill="#639ef5"/><circle cx="331.7" cy="117.3" r="1.15" fill="#639ef5"/><circle cx="333.7" cy="118.19" r="1.15" fill="#639ef5"/><circle cx="335.7" cy="116.75" r="1.15" fill="#639ef5"/><circle cx="337.7" cy="115.75" r="1.15" fill="#639ef5"/><circle cx="339.7" cy="117.6" r="1.15" fill="#639ef5"/><circle cx="341.7" cy="119" r="1.15" fill="#639ef5"/><circle cx="343.7" cy="118.5" r="1.15" fill="#639ef5"/><circle cx="345.7" cy="119.39" r="1.15" fill="#639ef5"/><circle cx="347.7" cy="120.78" r="1.15" fill="#639ef5"/><circle cx="349.7" cy="122.04" r="1.15" fill="#639ef5"/><circle cx="351.7" cy="122.35" r="1.15" fill="#639ef5"/><circle cx="353.7" cy="121.38" r="1.15" fill="#639ef5"/><circle cx="355.7" cy="119.53" r="1.15" fill="#639ef5"/><circle cx="357.7" cy="118.76" r="1.15" fill="#639ef5"/><circle cx="359.7" cy="118.26" r="1.15" fill="#639ef5"/><circle cx="361.7" cy="120.77" r="1.15" fill="#639ef5"/><circle cx="363.7" cy="123.78" r="1.15" fill="#639ef5"/><circle cx="365.7" cy="121.33" r="1.15" fill="#639ef5"/><circle cx="367.7" cy="117.65" r="1.15" fill="#639ef5"/><circle cx="369.7" cy="118.64" r="1.15" fill="#639ef5"/><circle cx="371.7" cy="122.33" r="1.15" fill="#639ef5"/><circle cx="373.7" cy="124.09" r="1.15" fill="#639ef5"/><circle cx="375.7" cy="126.11" r="1.15" fill="#639ef5"/><circle cx="377.7" cy="128.5" r="1.15" fill="#639ef5"/><circle cx="379.7" cy="129.03" r="1.15" fill="#639ef5"/><circle cx="381.7" cy="126.98" r="1.15" fill="#639ef5"/><circle cx="383.7" cy="124.7" r="1.15" fill="#639ef5"/><circle cx="385.7" cy="124.36" r="1.15" fill="#639ef5"/><circle cx="387.7" cy="125.93" r="1.15" fill="#639ef5"/><circle cx="389.7" cy="124.58" r="1.15" fill="#639ef5"/><circle cx="391.7" cy="119.94" r="1.15" fill="#639ef5"/><circle cx="393.7" cy="117.28" r="1.15" fill="#639ef5"/><circle cx="395.7" cy="116.27" r="1.15" fill="#639ef5"/><circle cx="397.7" cy="114.68" r="1.15" fill="#639ef5"/><circle cx="399.7" cy="113.48" r="1.15" fill="#639ef5"/><circle cx="401.7" cy="112.79" r="1.15" fill="#639ef5"/><circle cx="403.7" cy="113.2" r="1.15" fill="#639ef5"/><circle cx="405.7" cy="114.44" r="1.15" fill="#639ef5"/><circle cx="407.7" cy="115.53" r="1.15" fill="#639ef5"/><circle cx="409.7" cy="114.33" r="1.15" fill="#639ef5"/><circle cx="411.7" cy="112.93" r="1.15" fill="#639ef5"/><circle cx="413.7" cy="111.28" r="1.15" fill="#639ef5"/><circle cx="415.7" cy="113.51" r="1.15" fill="#639ef5"/><circle cx="417.7" cy="117.41" r="1.15" fill="#639ef5"/><circle cx="419.7" cy="118.99" r="1.15" fill="#639ef5"/><circle cx="421.7" cy="118.76" r="1.15" fill="#639ef5"/><circle cx="423.7" cy="118" r="1.15" fill="#639ef5"/><circle cx="425.7" cy="117.58" r="1.15" fill="#639ef5"/><circle cx="427.7" cy="117.54" r="1.15" fill="#639ef5"/><circle cx="429.7" cy="117.66" r="1.15" fill="#639ef5"/><circle cx="431.7" cy="117.47" r="1.15" fill="#639ef5"/><circle cx="433.7" cy="119.37" r="1.15" fill="#639ef5"/><circle cx="435.7" cy="121.74" r="1.15" fill="#639ef5"/><circle cx="437.7" cy="121.03" r="1.15" fill="#639ef5"/><circle cx="439.7" cy="119.08" r="1.15" fill="#639ef5"/><circle cx="441.7" cy="118.68" r="1.15" fill="#639ef5"/><circle cx="443.7" cy="120.73" r="1.15" fill="#639ef5"/><circle cx="445.7" cy="119.43" r="1.15" fill="#639ef5"/><circle cx="447.7" cy="118.68" r="1.15" fill="#639ef5"/><circle cx="449.7" cy="119.08" r="1.15" fill="#639ef5"/><circle cx="451.7" cy="120.08" r="1.15" fill="#639ef5"/><circle cx="453.7" cy="121.08" r="1.15" fill="#639ef5"/><circle cx="455.7" cy="120.17" r="1.15" fill="#639ef5"/><circle cx="457.7" cy="119.17" r="1.15" fill="#639ef5"/><circle cx="459.7" cy="118.68" r="1.15" fill="#639ef5"/><circle cx="461.7" cy="118.39" r="1.15" fill="#639ef5"/><circle cx="463.7" cy="117.52" r="1.15" fill="#639ef5"/><circle cx="465.7" cy="118.53" r="1.15" fill="#639ef5"/><circle cx="467.7" cy="116.15" r="1.15" fill="#639ef5"/><circle cx="469.7" cy="115.88" r="1.15" fill="#639ef5"/><circle cx="471.7" cy="116.96" r="1.15" fill="#639ef5"/><circle cx="473.7" cy="117.56" r="1.15" fill="#639ef5"/><circle cx="475.7" cy="118.16" r="1.15" fill="#639ef5"/><circle cx="477.7" cy="118.57" r="1.15" fill="#639ef5"/><circle cx="479.7" cy="120.14" r="1.15" fill="#639ef5"/><circle cx="481.7" cy="120.92" r="1.15" fill="#639ef5"/><circle cx="483.7" cy="120.07" r="1.15" fill="#639ef5"/><circle cx="485.7" cy="118.22" r="1.15" fill="#639ef5"/><circle cx="487.7" cy="118.62" r="1.15" fill="#639ef5"/><circle cx="489.7" cy="119.52" r="1.15" fill="#639ef5"/><circle cx="491.7" cy="120.27" r="1.15" fill="#639ef5"/><circle cx="493.7" cy="120.4" r="1.15" fill="#639ef5"/><circle cx="495.7" cy="120.01" r="1.15" fill="#639ef5"/><circle cx="497.7" cy="120.61" r="1.15" fill="#639ef5"/><circle cx="499.7" cy="121.4" r="1.15" fill="#639ef5"/><circle cx="501.7" cy="120.59" r="1.15" fill="#639ef5"/><circle cx="503.7" cy="119.4" r="1.15" fill="#639ef5"/><circle cx="505.7" cy="119.14" r="1.15" fill="#639ef5"/><circle cx="507.7" cy="120.54" r="1.15" fill="#639ef5"/><circle cx="509.7" cy="118.94" r="1.15" fill="#639ef5"/><circle cx="511.7" cy="118.34" r="1.15" fill="#639ef5"/><circle cx="513.7" cy="118.68" r="1.15" fill="#639ef5"/><circle cx="515.7" cy="120.2" r="1.15" fill="#639ef5"/><rect x="279.3" y="160" width="6.6" height="1.8" rx="0.8" fill="#5794f2"/><text x="292.7" y="162.3" font-size="6.3" fill="#c8c9d0" stroke="#c8c9d0" stroke-width="0.08" text-anchor="start" font-weight="normal" >logins</text><rect x="316.5" y="160" width="6.8" height="1.8" rx="0.8" fill="#b877d9"/><text x="330.1" y="162.3" font-size="6.3" fill="#c8c9d0" stroke="#c8c9d0" stroke-width="0.08" text-anchor="start" font-weight="normal" >logins (-1 hour)</text></svg>
<svg width="800" height="450" font-family="Liberation Sans"><text x="268" y="184.1" font-size="7.3" fill="#d8d9e0" stroke="#d8d9e0" stroke-width="0.22" text-anchor="middle" font-weight="normal" >server requests</text><path d="M23.4,286.9 H518.1" stroke="#2b2d32" stroke-width="0.8"/><text x="19.9" y="289" font-size="6" fill="#bfc0c7" stroke="#bfc0c7" stroke-width="0.08" text-anchor="end" font-weight="normal" >0</text><path d="M23.4,257.35 H518.1" stroke="#2b2d32" stroke-width="0.8"/><text x="19.9" y="259.45" font-size="6" fill="#bfc0c7" stroke="#bfc0c7" stroke-width="0.08" text-anchor="end" font-weight="normal" >50</text><path d="M23.4,227.8 H518.1" stroke="#2b2d32" stroke-width="0.8"/><text x="19.9" y="229.9" font-size="6" fill="#bfc0c7" stroke="#bfc0c7" stroke-width="0.08" text-anchor="end" font-weight="normal" >100</text><path d="M23.4,198.25 H518.1" stroke="#2b2d32" stroke-width="0.8"/><text x="19.9" y="200.35" font-size="6" fill="#bfc0c7" stroke="#bfc0c7" stroke-width="0.08" text-anchor="end" font-weight="normal" >150</text><text x="24.75" y="295.8" font-size="6" fill="#bfc0c7" stroke="#bfc0c7" stroke-width="0.08" text-anchor="middle" font-weight="normal" >16:50</text><text x="66.05" y="295.8" font-size="6" fill="#bfc0c7" stroke="#bfc0c7" stroke-width="0.08" text-anchor="middle" font-weight="normal" >16:55</text><text x="107.35" y="295.8" font-size="6" fill="#bfc0c7" stroke="#bfc0c7" stroke-width="0.08" text-anchor="middle" font-weight="normal" >17:00</text><text x="148.65" y="295.8" font-size="6" fill="#bfc0c7" stroke="#bfc0c7" stroke-width="0.08" text-anchor="middle" font-weight="normal" >17:05</text><text x="189.95" y="295.8" font-size="6" fill="#bfc0c7" stroke="#bfc0c7" stroke-width="0.08" text-anchor="middle" font-weight="normal" >17:10</text><text x="231.25" y="295.8" font-size="6" fill="#bfc0c7" stroke="#bfc0c7" stroke-width="0.08" text-anchor="middle" font-weight="normal" >17:15</text><text x="272.55" y="295.8" font-size="6" fill="#bfc0c7" stroke="#bfc0c7" stroke-width="0.08" text-anchor="middle" font-weight="normal" >17:20</text><text x="313.85" y="295.8" font-size="6" fill="#bfc0c7" stroke="#bfc0c7" stroke-width="0.08" text-anchor="middle" font-weight="normal" >17:25</text><text x="355.15" y="295.8" font-size="6" fill="#bfc0c7" stroke="#bfc0c7" stroke-width="0.08" text-anchor="middle" font-weight="normal" >17:30</text><text x="396.45" y="295.8" font-size="6" fill="#bfc0c7" stroke="#bfc0c7" stroke-width="0.08" text-anchor="middle" font-weight="normal" >17:35</text><text x="437.75" y="295.8" font-size="6" fill="#bfc0c7" stroke="#bfc0c7" stroke-width="0.08" text-anchor="middle" font-weight="normal" >17:40</text><text x="479.05" y="295.8" font-size="6" fill="#bfc0c7" stroke="#bfc0c7" stroke-width="0.08" text-anchor="middle" font-weight="normal" >17:45</text><path d="M23.4,222.07 L25.6,221.75 L27.8,218.7 L30,219.71 L32.2,220.23 L34.4,220.9 L36.6,221.01 L38.8,218.67 L41,219.47 L43.2,219.94 L45.4,219.66 L47.6,218.93 L49.8,218.78 L52,218.12 L54.2,218.82 L56.4,220.89 L58.6,221.46 L60.8,219.18 L63,218.61 L65.2,220.33 L67.4,220.63 L69.6,220.12 L71.8,219.97 L74,220.58 L76.2,220.79 L78.4,219.44 L80.6,219.85 L82.8,220.52 L85,216.72 L87.2,210.06 L89.4,214.01 L91.6,216.9 L93.8,217.14 L96,220.42 L98.2,219.89 L100.4,218.44 L102.6,219.72 L104.8,219.89 L107,218.03 L109.2,219.4 L111.4,220.41 L113.6,220.63 L115.8,220.32 L118,219.35 L120.2,218.16 L122.4,217.77 L124.6,219.31 L126.8,219.77 L129,220.17 L131.2,219.75 L133.4,219.49 L135.6,219.44 L137.8,217.82 L140,217.05 L142.2,219.6 L144.4,219.45 L146.6,218.11 L148.8,220.48 L151,221.7 L153.2,219.48 L155.4,220.17 L157.6,221.76 L159.8,220.93 L162,218.04 L164.2,217.45 L166.4,219.2 L168.6,219.53 L170.8,219.21 L173,220.23 L175.2,219.09 L177.4,217.46 L179.6,217.49 L181.8,218.69 L184,219.19 L186.2,218.91 L188.4,219.04 L190.6,219.93 L192.8,220.07 L195,219.38 L197.2,219.39 L199.4,219.74 L201.6,220.93 L203.8,221.88 L206,222.17 L208.2,219.05 L210.4,218.2 L212.6,219.46 L214.8,218.51 L217,221.02 L219.2,221.53 L221.4,221.53 L223.6,220.38 L225.8,220.99 L228,221.34 L230.2,220.6 L232.4,221.24 L234.6,222.06 L236.8,222.41 L239,221.99 L241.2,220.13 L243.4,218.04 L245.6,218.36 L247.8,220.37 L250,221.17 L252.2,221.96 L254.4,219.98 L256.6,220.51 L258.8,220.11 L261,217.9 L263.2,219.2 L265.4,222.02 L267.6,221.23 L269.8,221.9 L272,222.69 L274.2,220.1 L276.4,220.03 L278.6,218.88 L280.8,218.44 L283,217.73 L285.2,217.49 L287.4,218.53 L289.6,218.86 L291.8,219.93 L294,221.67 L296.2,219.94 L298.4,218.97 L300.6,220 L302.8,219.21 L305,218.6 L307.2,217.75 L309.4,218.49 L311.6,220.64 L313.8,221.04 L316,219.75 L318.2,220.46 L320.4,220.28 L322.6,219.25 L324.8,218.89 L327,219.63 L329.2,219.88 L331.4,217.45 L333.6,215.32 L335.8,216.97 L338,219.29 L340.2,219.73 L342.4,218.44 L344.6,218.08 L346.8,218.89 L349,220.21 L351.2,219.7 L353.4,218.03 L355.6,216.88 L357.8,218.89 L360,221.12 L362.2,219.81 L364.4,218.68 L366.6,218.94 L368.8,219.22 L371,218.05 L373.2,216.83 L375.4,219.28 L377.6,218.43 L379.8,217.44 L382,217.34 L384.2,217.45 L386.4,216.83 L388.6,216.42 L390.8,217.13 L393,217.99 L395.2,219.22 L397.4,218.29 L399.6,218.42 L401.8,218.9 L404,220.23 L406.2,220.23 L408.4,220.06 L410.6,219.29 L412.8,223.25 L415,228.96 L417.2,232.83 L419.4,232.33 L421.6,233.58 L423.8,231.95 L426,230.6 L428.2,227.9 L430.4,222.03 L432.6,211.66 L434.8,213.99 L437,211.49 L439.2,208.79 L441.4,209.73 L443.6,211.01 L445.8,210.58 L448,212.65 L450.2,220.18 L452.4,217.38 L454.6,219.42 L456.8,220.86 L459,222.52 L461.2,223.95 L463.4,222.42 L465.6,222.09 L467.8,222.08 L470,223.14 L472.2,222.68 L474.4,222.22 L476.6,220.34 L478.8,219.14 L481,218.82 L483.2,220.76 L485.4,222.31 L487.6,223.56 L489.8,223.11 L492,222.68 L494.2,223.28 L496.4,222.77 L498.6,220.61 L500.8,221.57 L503,222.08 L505.2,219.81 L507.4,217.69 L509.6,219.25 L511.8,221.36 L514,222.86 L516.2,222.93 L516.2,286.9 L23.4,286.9 Z" fill="#173a60"/><path d="M23.4,238.45 L25.6,237.96 L27.8,236.54 L30,238.1 L32.2,238.41 L34.4,238.76 L36.6,238.36 L38.8,235.27 L41,235.67 L43.2,236.37 L45.4,236.9 L47.6,236.97 L49.8,237.01 L52,236.31 L54.2,236.45 L56.4,237.57 L58.6,238.82 L60.8,237.17 L63,236.81 L65.2,238.73 L67.4,238.53 L69.6,237.61 L71.8,237.31 L74,237.81 L76.2,238.11 L78.4,237.97 L80.6,238.01 L82.8,238.16 L85,235.11 L87.2,230.3 L89.4,233.29 L91.6,235.34 L93.8,235.07 L96,237.83 L98.2,237.33 L100.4,235.97 L102.6,236.44 L104.8,236.6 L107,236.1 L109.2,235.92 L111.4,236.52 L113.6,237.11 L115.8,237.15 L118,236.51 L120.2,236.24 L122.4,236.36 L124.6,236.55 L126.8,237.24 L129,237.64 L131.2,236.63 L133.4,236.31 L135.6,236.21 L137.8,235.36 L140,235.57 L142.2,236.3 L144.4,236.42 L146.6,236.11 L148.8,237.64 L151,238.19 L153.2,235.85 L155.4,236.34 L157.6,237.69 L159.8,238.02 L162,236.43 L164.2,235.92 L166.4,237.47 L168.6,237.37 L170.8,236.12 L173,236.23 L175.2,236.62 L177.4,236.08 L179.6,235.32 L181.8,235.84 L184,236.61 L186.2,236.6 L188.4,236.54 L190.6,236.97 L192.8,236.96 L195,236.62 L197.2,236.48 L199.4,236.74 L201.6,237.87 L203.8,238.59 L206,238.35 L208.2,236.99 L210.4,235.8 L212.6,236.52 L214.8,237.36 L217,238.67 L219.2,237.96 L221.4,237.63 L223.6,237.96 L225.8,237.93 L228,237.49 L230.2,237.12 L232.4,237.82 L234.6,238.48 L236.8,238.74 L239,239.44 L241.2,238.56 L243.4,236.88 L245.6,236.73 L247.8,237.42 L250,237.56 L252.2,238 L254.4,236.41 L256.6,237.47 L258.8,237.85 L261,236.42 L263.2,236.45 L265.4,238.11 L267.6,237.77 L269.8,238.59 L272,239.33 L274.2,236.62 L276.4,236.43 L278.6,237.24 L280.8,237.43 L283,236.82 L285.2,236.46 L287.4,237.34 L289.6,237.5 L291.8,238.36 L294,239.68 L296.2,237.51 L298.4,235.82 L300.6,237.32 L302.8,237.45 L305,237.19 L307.2,235.61 L309.4,235.61 L311.6,238.36 L313.8,239.49 L316,238.32 L318.2,239.06 L320.4,238.65 L322.6,237.35 L324.8,236.41 L327,236.56 L329.2,237.57 L331.4,236.04 L333.6,234.42 L335.8,235.99 L338,237.93 L340.2,237.98 L342.4,237.1 L344.6,237.1 L346.8,237.54 L349,237.45 L351.2,236.33 L353.4,236.04 L355.6,235.13 L357.8,237.31 L360,238.85 L362.2,236.86 L364.4,236.65 L366.6,237.88 L368.8,238.03 L371,236.72 L373.2,235.61 L375.4,238.15 L377.6,237.32 L379.8,236.33 L382,235.76 L384.2,235.97 L386.4,235.75 L388.6,234.74 L390.8,234.84 L393,234.97 L395.2,235.43 L397.4,236.04 L399.6,236.83 L401.8,237.74 L404,237.9 L406.2,236.87 L408.4,237.94 L410.6,237.3 L412.8,238.33 L415,241.17 L417.2,243.78 L419.4,246.62 L421.6,246.78 L423.8,246.14 L426,243.02 L428.2,237.39 L430.4,233.91 L432.6,231.58 L434.8,232.02 L437,230.21 L439.2,228.75 L441.4,229.21 L443.6,229.72 L445.8,229.75 L448,231.17 L450.2,236.1 L452.4,235.23 L454.6,235.16 L456.8,235.1 L459,235.26 L461.2,234.91 L463.4,233.11 L465.6,232.71 L467.8,232.8 L470,234.11 L472.2,234.52 L474.4,234.32 L476.6,232.66 L478.8,231.78 L481,231.77 L483.2,232.79 L485.4,234.43 L487.6,236.06 L489.8,235.73 L492,235.39 L494.2,235.58 L496.4,234.98 L498.6,233.06 L500.8,234.45 L503,235.96 L505.2,234.63 L507.4,232.1 L509.6,233.25 L511.8,234.87 L514,235.93 L516.2,236.29 L516.2,286.9 L23.4,286.9 Z" fill="#255b90"/><path d="M23.4,254.01 L25.6,253.93 L27.8,252.92 L30,252.91 L32.2,253.12 L34.4,253.82 L36.6,254.37 L38.8,252.85 L41,252.97 L43.2,253.37 L45.4,253.55 L47.6,253.44 L49.8,253.44 L52,252.6 L54.2,252.59 L56.4,253.86 L58.6,255.33 L60.8,253.91 L63,253.33 L65.2,254.51 L67.4,254.77 L69.6,254.74 L71.8,254.17 L74,254.56 L76.2,254.86 L78.4,254.62 L80.6,254.25 L82.8,253.98 L85,252.21 L87.2,250.08 L89.4,251.28 L91.6,252.12 L93.8,252.19 L96,253.04 L98.2,253.88 L100.4,253.27 L102.6,253.12 L104.8,252.93 L107,252.17 L109.2,251.69 L111.4,252.37 L113.6,253.35 L115.8,253.62 L118,253.11 L120.2,252.99 L122.4,253.35 L124.6,253.77 L126.8,254.34 L129,254.51 L131.2,253.43 L133.4,253.56 L135.6,253.57 L137.8,252.77 L140,252.89 L142.2,253.31 L144.4,253.4 L146.6,253.26 L148.8,253.88 L151,253.92 L153.2,253.12 L155.4,252.71 L157.6,253.09 L159.8,253.09 L162,251.96 L164.2,251.78 L166.4,253.04 L168.6,253.64 L170.8,253.24 L173,253.15 L175.2,253.35 L177.4,253.11 L179.6,252.68 L181.8,252.89 L184,253.2 L186.2,252.78 L188.4,252.47 L190.6,252.66 L192.8,253.14 L195,252.59 L197.2,252.06 L199.4,253.11 L201.6,253.5 L203.8,253.52 L206,253.65 L208.2,252.68 L210.4,252.23 L212.6,253.7 L214.8,254.43 L217,254.89 L219.2,254.39 L221.4,254.35 L223.6,254.56 L225.8,254.46 L228,254.63 L230.2,254.72 L232.4,254.53 L234.6,254.48 L236.8,254.44 L239,255.12 L241.2,255.79 L243.4,254.26 L245.6,253.37 L247.8,253.59 L250,253.18 L252.2,252.97 L254.4,251.91 L256.6,253.96 L258.8,254.59 L261,253.21 L263.2,253.34 L265.4,255.06 L267.6,254.59 L269.8,254.4 L272,254.18 L274.2,253.25 L276.4,252.89 L278.6,253.15 L280.8,253.21 L283,253.23 L285.2,252.84 L287.4,253.27 L289.6,253.45 L291.8,254.27 L294,255.47 L296.2,253.75 L298.4,252.98 L300.6,254.06 L302.8,253.77 L305,253.13 L307.2,252.07 L309.4,252.72 L311.6,254.11 L313.8,255.61 L316,255.33 L318.2,255.11 L320.4,255.32 L322.6,254.85 L324.8,253.95 L327,253.52 L329.2,253.6 L331.4,252.94 L333.6,251.95 L335.8,252.32 L338,253.77 L340.2,254.58 L342.4,254.35 L344.6,253.9 L346.8,253.49 L349,253.46 L351.2,253.66 L353.4,253.48 L355.6,252.58 L357.8,253.54 L360,254.57 L362.2,253.98 L364.4,253.32 L366.6,253.92 L368.8,254.2 L371,253.53 L373.2,253.36 L375.4,253.96 L377.6,252.92 L379.8,253.07 L382,253.4 L384.2,253.05 L386.4,252.27 L388.6,251.43 L390.8,252.17 L393,252.8 L395.2,252.85 L397.4,253.27 L399.6,253.95 L401.8,254.53 L404,254.05 L406.2,252.66 L408.4,253.61 L410.6,253.93 L412.8,254.52 L415,256.77 L417.2,258.6 L419.4,260.68 L421.6,260.99 L423.8,260.45 L426,258.79 L428.2,253.85 L430.4,250.55 L432.6,249.57 L434.8,249.95 L437,248.79 L439.2,248.36 L441.4,248.39 L443.6,248.57 L445.8,248.86 L448,250.3 L450.2,253.02 L452.4,253.1 L454.6,253.59 L456.8,253.78 L459,253.84 L461.2,253.27 L463.4,251.56 L465.6,251.4 L467.8,250.94 L470,251.69 L472.2,252.92 L474.4,253.75 L476.6,252.36 L478.8,251.29 L481,250.95 L483.2,251.29 L485.4,252.1 L487.6,252.9 L489.8,252.89 L492,252.89 L494.2,253.3 L496.4,253.13 L498.6,251.81 L500.8,251.61 L503,252.57 L505.2,252.27 L507.4,251.14 L509.6,251.03 L511.8,251.39 L514,252.65 L516.2,253.34 L516.2,286.9 L23.4,286.9 Z" fill="#466a8b"/><path d="M23.4,269.46 L25.6,269.35 L27.8,269.76 L30,269.55 L32.2,269.57 L34.4,270.16 L36.6,270.64 L38.8,269.09 L41,269.06 L43.2,269.28 L45.4,269.91 L47.6,270.15 L49.8,270.39 L52,269.78 L54.2,269.14 L56.4,269.72 L58.6,270.47 L60.8,269.32 L63,269.22 L65.2,270.26 L67.4,270.65 L69.6,270.78 L71.8,270.1 L74,270.1 L76.2,270.37 L78.4,270.41 L80.6,270.38 L82.8,270.28 L85,269.43 L87.2,269.11 L89.4,269.35 L91.6,269 L93.8,268.89 L96,269.77 L98.2,270.65 L100.4,269.76 L102.6,269.14 L104.8,268.9 L107,268.77 L109.2,268.92 L111.4,269.34 L113.6,269.94 L115.8,269.86 L118,269.15 L120.2,269.08 L122.4,269.46 L124.6,269.9 L126.8,270.47 L129,270.47 L131.2,269.23 L133.4,269.81 L135.6,270.42 L137.8,269.76 L140,269.39 L142.2,269.76 L144.4,270.02 L146.6,269.84 L148.8,269.73 L151,269.72 L153.2,269.72 L155.4,269.77 L157.6,270.34 L159.8,270.35 L162,269.3 L164.2,268.87 L166.4,269.58 L168.6,269.94 L170.8,269.74 L173,269.49 L175.2,269.24 L177.4,269.06 L179.6,268.95 L181.8,269.29 L184,269.71 L186.2,269.65 L188.4,269.59 L190.6,269.89 L192.8,270.3 L195,269.45 L197.2,268.72 L199.4,269.09 L201.6,268.98 L203.8,268.88 L206,268.91 L208.2,268.99 L210.4,269.21 L212.6,269.52 L214.8,270.11 L217,270.81 L219.2,270.29 L221.4,269.78 L223.6,269.67 L225.8,269.8 L228,270 L230.2,269.97 L232.4,269.7 L234.6,269.59 L236.8,269.51 L239,270.18 L241.2,270.85 L243.4,270.6 L245.6,269.95 L247.8,269.11 L250,268.96 L252.2,269.03 L254.4,269.34 L256.6,269.9 L258.8,270.25 L261,269.82 L263.2,269.39 L265.4,270.51 L267.6,269.81 L269.8,269.77 L272,270.65 L274.2,270.37 L276.4,270.18 L278.6,270.54 L280.8,270.56 L283,270.48 L285.2,269.61 L287.4,269.57 L289.6,270.1 L291.8,270.51 L294,270.85 L296.2,270.29 L298.4,270.17 L300.6,270.67 L302.8,270.27 L305,269.88 L307.2,269.63 L309.4,269.66 L311.6,270.27 L313.8,270.87 L316,270.64 L318.2,270.58 L320.4,270.57 L322.6,270.15 L324.8,269.57 L327,269.68 L329.2,270.26 L331.4,270.03 L333.6,269.49 L335.8,269.21 L338,269.94 L340.2,270.34 L342.4,270.14 L344.6,270.04 L346.8,270.13 L349,270.31 L351.2,270.62 L353.4,270.25 L355.6,268.85 L357.8,269.23 L360,269.89 L362.2,270.22 L364.4,270.21 L366.6,270.14 L368.8,269.73 L371,269.31 L373.2,269.67 L375.4,270.34 L377.6,268.99 L379.8,268.98 L382,269.19 L384.2,269.42 L386.4,269.45 L388.6,268.93 L390.8,269.03 L393,269.19 L395.2,269.46 L397.4,269.88 L399.6,270.2 L401.8,270.45 L404,270.2 L406.2,269.94 L408.4,270.44 L410.6,270.58 L412.8,270.96 L415,272.5 L417.2,274.14 L419.4,275.01 L421.6,273.92 L423.8,273.46 L426,272.21 L428.2,268.64 L430.4,266.66 L432.6,267.27 L434.8,267.37 L437,266.73 L439.2,266.38 L441.4,266.04 L443.6,265.92 L445.8,265.95 L448,267.87 L450.2,269.8 L452.4,270.03 L454.6,270.27 L456.8,270.47 L459,270.63 L461.2,270.25 L463.4,268.79 L465.6,269.05 L467.8,269.09 L470,268.99 L472.2,269.42 L474.4,270.13 L476.6,269.31 L478.8,268.84 L481,268.74 L483.2,269.11 L485.4,269.93 L487.6,270.63 L489.8,270.67 L492,270.71 L494.2,270.7 L496.4,269.98 L498.6,269.26 L500.8,269.43 L503,269.89 L505.2,269.9 L507.4,269.37 L509.6,269.24 L511.8,269.54 L514,270.27 L516.2,270.22 L516.2,286.9 L23.4,286.9 Z" fill="#7f949e"/><path d="M23.4,222.07 L25.6,221.75 L27.8,218.7 L30,219.71 L32.2,220.23 L34.4,220.9 L36.6,221.01 L38.8,218.67 L41,219.47 L43.2,219.94 L45.4,219.66 L47.6,218.93 L49.8,218.78 L52,218.12 L54.2,218.82 L56.4,220.89 L58.6,221.46 L60.8,219.18 L63,218.61 L65.2,220.33 L67.4,220.63 L69.6,220.12 L71.8,219.97 L74,220.58 L76.2,220.79 L78.4,219.44 L80.6,219.85 L82.8,220.52 L85,216.72 L87.2,210.06 L89.4,214.01 L91.6,216.9 L93.8,217.14 L96,220.42 L98.2,219.89 L100.4,218.44 L102.6,219.72 L104.8,219.89 L107,218.03 L109.2,219.4 L111.4,220.41 L113.6,220.63 L115.8,220.32 L118,219.35 L120.2,218.16 L122.4,217.77 L124.6,219.31 L126.8,219.77 L129,220.17 L131.2,219.75 L133.4,219.49 L135.6,219.44 L137.8,217.82 L140,217.05 L142.2,219.6 L144.4,219.45 L146.6,218.11 L148.8,220.48 L151,221.7 L153.2,219.48 L155.4,220.17 L157.6,221.76 L159.8,220.93 L162,218.04 L164.2,217.45 L166.4,219.2 L168.6,219.53 L170.8,219.21 L173,220.23 L175.2,219.09 L177.4,217.46 L179.6,217.49 L181.8,218.69 L184,219.19 L186.2,218.91 L188.4,219.04 L190.6,219.93 L192.8,220.07 L195,219.38 L197.2,219.39 L199.4,219.74 L201.6,220.93 L203.8,221.88 L206,222.17 L208.2,219.05 L210.4,218.2 L212.6,219.46 L214.8,218.51 L217,221.02 L219.2,221.53 L221.4,221.53 L223.6,220.38 L225.8,220.99 L228,221.34 L230.2,220.6 L232.4,221.24 L234.6,222.06 L236.8,222.41 L239,221.99 L241.2,220.13 L243.4,218.04 L245.6,218.36 L247.8,220.37 L250,221.17 L252.2,221.96 L254.4,219.98 L256.6,220.51 L258.8,220.11 L261,217.9 L263.2,219.2 L265.4,222.02 L267.6,221.23 L269.8,221.9 L272,222.69 L274.2,220.1 L276.4,220.03 L278.6,218.88 L280.8,218.44 L283,217.73 L285.2,217.49 L287.4,218.53 L289.6,218.86 L291.8,219.93 L294,221.67 L296.2,219.94 L298.4,218.97 L300.6,220 L302.8,219.21 L305,218.6 L307.2,217.75 L309.4,218.49 L311.6,220.64 L313.8,221.04 L316,219.75 L318.2,220.46 L320.4,220.28 L322.6,219.25 L324.8,218.89 L327,219.63 L329.2,219.88 L331.4,217.45 L333.6,215.32 L335.8,216.97 L338,219.29 L340.2,219.73 L342.4,218.44 L344.6,218.08 L346.8,218.89 L349,220.21 L351.2,219.7 L353.4,218.03 L355.6,216.88 L357.8,218.89 L360,221.12 L362.2,219.81 L364.4,218.68 L366.6,218.94 L368.8,219.22 L371,218.05 L373.2,216.83 L375.4,219.28 L377.6,218.43 L379.8,217.44 L382,217.34 L384.2,217.45 L386.4,216.83 L388.6,216.42 L390.8,217.13 L393,217.99 L395.2,219.22 L397.4,218.29 L399.6,218.42 L401.8,218.9 L404,220.23 L406.2,220.23 L408.4,220.06 L410.6,219.29 L412.8,223.25 L415,228.96 L417.2,232.83 L419.4,232.33 L421.6,233.58 L423.8,231.95 L426,230.6 L428.2,227.9 L430.4,222.03 L432.6,211.66 L434.8,213.99 L437,211.49 L439.2,208.79 L441.4,209.73 L443.6,211.01 L445.8,210.58 L448,212.65 L450.2,220.18 L452.4,217.38 L454.6,219.42 L456.8,220.86 L459,222.52 L461.2,223.95 L463.4,222.42 L465.6,222.09 L467.8,222.08 L470,223.14 L472.2,222.68 L474.4,222.22 L476.6,220.34 L478.8,219.14 L481,218.82 L483.2,220.76 L485.4,222.31 L487.6,223.56 L489.8,223.11 L492,222.68 L494.2,223.28 L496.4,222.77 L498.6,220.61 L500.8,221.57 L503,222.08 L505.2,219.81 L507.4,217.69 L509.6,219.25 L511.8,221.36 L514,222.86 L516.2,222.93" stroke="#1f4c82" stroke-width="0.8" fill="none"/><path d="M23.4,238.45 L25.6,237.96 L27.8,236.54 L30,238.1 L32.2,238.41 L34.4,238.76 L36.6,238.36 L38.8,235.27 L41,235.67 L43.2,236.37 L45.4,236.9 L47.6,236.97 L49.8,237.01 L52,236.31 L54.2,236.45 L56.4,237.57 L58.6,238.82 L60.8,237.17 L63,236.81 L65.2,238.73 L67.4,238.53 L69.6,237.61 L71.8,237.31 L74,237.81 L76.2,238.11 L78.4,237.97 L80.6,238.01 L82.8,238.16 L85,235.11 L87.2,230.3 L89.4,233.29 L91.6,235.34 L93.8,235.07 L96,237.83 L98.2,237.33 L100.4,235.97 L102.6,236.44 L104.8,236.6 L107,236.1 L109.2,235.92 L111.4,236.52 L113.6,237.11 L115.8,237.15 L118,236.51 L120.2,236.24 L122.4,236.36 L124.6,236.55 L126.8,237.24 L129,237.64 L131.2,236.63 L133.4,236.31 L135.6,236.21 L137.8,235.36 L140,235.57 L142.2,236.3 L144.4,236.42 L146.6,236.11 L148.8,237.64 L151,238.19 L153.2,235.85 L155.4,236.34 L157.6,237.69 L159.8,238.02 L162,236.43 L164.2,235.92 L166.4,237.47 L168.6,237.37 L170.8,236.12 L173,236.23 L175.2,236.62 L177.4,236.08 L179.6,235.32 L181.8,235.84 L184,236.61 L186.2,236.6 L188.4,236.54 L190.6,236.97 L192.8,236.96 L195,236.62 L197.2,236.48 L199.4,236.74 L201.6,237.87 L203.8,238.59 L206,238.35 L208.2,236.99 L210.4,235.8 L212.6,236.52 L214.8,237.36 L217,238.67 L219.2,237.96 L221.4,237.63 L223.6,237.96 L225.8,237.93 L228,237.49 L230.2,237.12 L232.4,237.82 L234.6,238.48 L236.8,238.74 L239,239.44 L241.2,238.56 L243.4,236.88 L245.6,236.73 L247.8,237.42 L250,237.56 L252.2,238 L254.4,236.41 L256.6,237.47 L258.8,237.85 L261,236.42 L263.2,236.45 L265.4,238.11 L267.6,237.77 L269.8,238.59 L272,239.33 L274.2,236.62 L276.4,236.43 L278.6,237.24 L280.8,237.43 L283,236.82 L285.2,236.46 L287.4,237.34 L289.6,237.5 L291.8,238.36 L294,239.68 L296.2,237.51 L298.4,235.82 L300.6,237.32 L302.8,237.45 L305,237.19 L307.2,235.61 L309.4,235.61 L311.6,238.36 L313.8,239.49 L316,238.32 L318.2,239.06 L320.4,238.65 L322.6,237.35 L324.8,236.41 L327,236.56 L329.2,237.57 L331.4,236.04 L333.6,234.42 L335.8,235.99 L338,237.93 L340.2,237.98 L342.4,237.1 L344.6,237.1 L346.8,237.54 L349,237.45 L351.2,236.33 L353.4,236.04 L355.6,235.13 L357.8,237.31 L360,238.85 L362.2,236.86 L364.4,236.65 L366.6,237.88 L368.8,238.03 L371,236.72 L373.2,235.61 L375.4,238.15 L377.6,237.32 L379.8,236.33 L382,235.76 L384.2,235.97 L386.4,235.75 L388.6,234.74 L390.8,234.84 L393,234.97 L395.2,235.43 L397.4,236.04 L399.6,236.83 L401.8,237.74 L404,237.9 L406.2,236.87 L408.4,237.94 L410.6,237.3 L412.8,238.33 L415,241.17 L417.2,243.78 L419.4,246.62 L421.6,246.78 L423.8,246.14 L426,243.02 L428.2,237.39 L430.4,233.91 L432.6,231.58 L434.8,232.02 L437,230.21 L439.2,228.75 L441.4,229.21 L443.6,229.72 L445.8,229.75 L448,231.17 L450.2,236.1 L452.4,235.23 L454.6,235.16 L456.8,235.1 L459,235.26 L461.2,234.91 L463.4,233.11 L465.6,232.71 L467.8,232.8 L470,234.11 L472.2,234.52 L474.4,234.32 L476.6,232.66 L478.8,231.78 L481,231.77 L483.2,232.79 L485.4,234.43 L487.6,236.06 L489.8,235.73 L492,235.39 L494.2,235.58 L496.4,234.98 L498.6,233.06 L500.8,234.45 L503,235.96 L505.2,234.63 L507.4,232.1 L509.6,233.25 L511.8,234.87 L514,235.93 L516.2,236.29" stroke="#3680cc" stroke-width="0.8" fill="none"/><path d="M23.4,254.01 L25.6,253.93 L27.8,252.92 L30,252.91 L32.2,253.12 L34.4,253.82 L36.6,254.37 L38.8,252.85 L41,252.97 L43.2,253.37 L45.4,253.55 L47.6,253.44 L49.8,253.44 L52,252.6 L54.2,252.59 L56.4,253.86 L58.6,255.33 L60.8,253.91 L63,253.33 L65.2,254.51 L67.4,254.77 L69.6,254.74 L71.8,254.17 L74,254.56 L76.2,254.86 L78.4,254.62 L80.6,254.25 L82.8,253.98 L85,252.21 L87.2,250.08 L89.4,251.28 L91.6,252.12 L93.8,252.19 L96,253.04 L98.2,253.88 L100.4,253.27 L102.6,253.12 L104.8,252.93 L107,252.17 L109.2,251.69 L111.4,252.37 L113.6,253.35 L115.8,253.62 L118,253.11 L120.2,252.99 L122.4,253.35 L124.6,253.77 L126.8,254.34 L129,254.51 L131.2,253.43 L133.4,253.56 L135.6,253.57 L137.8,252.77 L140,252.89 L142.2,253.31 L144.4,253.4 L146.6,253.26 L148.8,253.88 L151,253.92 L153.2,253.12 L155.4,252.71 L157.6,253.09 L159.8,253.09 L162,251.96 L164.2,251.78 L166.4,253.04 L168.6,253.64 L170.8,253.24 L173,253.15 L175.2,253.35 L177.4,253.11 L179.6,252.68 L181.8,252.89 L184,253.2 L186.2,252.78 L188.4,252.47 L190.6,252.66 L192.8,253.14 L195,252.59 L197.2,252.06 L199.4,253.11 L201.6,253.5 L203.8,253.52 L206,253.65 L208.2,252.68 L210.4,252.23 L212.6,253.7 L214.8,254.43 L217,254.89 L219.2,254.39 L221.4,254.35 L223.6,254.56 L225.8,254.46 L228,254.63 L230.2,254.72 L232.4,254.53 L234.6,254.48 L236.8,254.44 L239,255.12 L241.2,255.79 L243.4,254.26 L245.6,253.37 L247.8,253.59 L250,253.18 L252.2,252.97 L254.4,251.91 L256.6,253.96 L258.8,254.59 L261,253.21 L263.2,253.34 L265.4,255.06 L267.6,254.59 L269.8,254.4 L272,254.18 L274.2,253.25 L276.4,252.89 L278.6,253.15 L280.8,253.21 L283,253.23 L285.2,252.84 L287.4,253.27 L289.6,253.45 L291.8,254.27 L294,255.47 L296.2,253.75 L298.4,252.98 L300.6,254.06 L302.8,253.77 L305,253.13 L307.2,252.07 L309.4,252.72 L311.6,254.11 L313.8,255.61 L316,255.33 L318.2,255.11 L320.4,255.32 L322.6,254.85 L324.8,253.95 L327,253.52 L329.2,253.6 L331.4,252.94 L333.6,251.95 L335.8,252.32 L338,253.77 L340.2,254.58 L342.4,254.35 L344.6,253.9 L346.8,253.49 L349,253.46 L351.2,253.66 L353.4,253.48 L355.6,252.58 L357.8,253.54 L360,254.57 L362.2,253.98 L364.4,253.32 L366.6,253.92 L368.8,254.2 L371,253.53 L373.2,253.36 L375.4,253.96 L377.6,252.92 L379.8,253.07 L382,253.4 L384.2,253.05 L386.4,252.27 L388.6,251.43 L390.8,252.17 L393,252.8 L395.2,252.85 L397.4,253.27 L399.6,253.95 L401.8,254.53 L404,254.05 L406.2,252.66 L408.4,253.61 L410.6,253.93 L412.8,254.52 L415,256.77 L417.2,258.6 L419.4,260.68 L421.6,260.99 L423.8,260.45 L426,258.79 L428.2,253.85 L430.4,250.55 L432.6,249.57 L434.8,249.95 L437,248.79 L439.2,248.36 L441.4,248.39 L443.6,248.57 L445.8,248.86 L448,250.3 L450.2,253.02 L452.4,253.1 L454.6,253.59 L456.8,253.78 L459,253.84 L461.2,253.27 L463.4,251.56 L465.6,251.4 L467.8,250.94 L470,251.69 L472.2,252.92 L474.4,253.75 L476.6,252.36 L478.8,251.29 L481,250.95 L483.2,251.29 L485.4,252.1 L487.6,252.9 L489.8,252.89 L492,252.89 L494.2,253.3 L496.4,253.13 L498.6,251.81 L500.8,251.61 L503,252.57 L505.2,252.27 L507.4,251.14 L509.6,251.03 L511.8,251.39 L514,252.65 L516.2,253.34" stroke="#5b8fc2" stroke-width="0.8" fill="none"/><path d="M23.4,269.46 L25.6,269.35 L27.8,269.76 L30,269.55 L32.2,269.57 L34.4,270.16 L36.6,270.64 L38.8,269.09 L41,269.06 L43.2,269.28 L45.4,269.91 L47.6,270.15 L49.8,270.39 L52,269.78 L54.2,269.14 L56.4,269.72 L58.6,270.47 L60.8,269.32 L63,269.22 L65.2,270.26 L67.4,270.65 L69.6,270.78 L71.8,270.1 L74,270.1 L76.2,270.37 L78.4,270.41 L80.6,270.38 L82.8,270.28 L85,269.43 L87.2,269.11 L89.4,269.35 L91.6,269 L93.8,268.89 L96,269.77 L98.2,270.65 L100.4,269.76 L102.6,269.14 L104.8,268.9 L107,268.77 L109.2,268.92 L111.4,269.34 L113.6,269.94 L115.8,269.86 L118,269.15 L120.2,269.08 L122.4,269.46 L124.6,269.9 L126.8,270.47 L129,270.47 L131.2,269.23 L133.4,269.81 L135.6,270.42 L137.8,269.76 L140,269.39 L142.2,269.76 L144.4,270.02 L146.6,269.84 L148.8,269.73 L151,269.72 L153.2,269.72 L155.4,269.77 L157.6,270.34 L159.8,270.35 L162,269.3 L164.2,268.87 L166.4,269.58 L168.6,269.94 L170.8,269.74 L173,269.49 L175.2,269.24 L177.4,269.06 L179.6,268.95 L181.8,269.29 L184,269.71 L186.2,269.65 L188.4,269.59 L190.6,269.89 L192.8,270.3 L195,269.45 L197.2,268.72 L199.4,269.09 L201.6,268.98 L203.8,268.88 L206,268.91 L208.2,268.99 L210.4,269.21 L212.6,269.52 L214.8,270.11 L217,270.81 L219.2,270.29 L221.4,269.78 L223.6,269.67 L225.8,269.8 L228,270 L230.2,269.97 L232.4,269.7 L234.6,269.59 L236.8,269.51 L239,270.18 L241.2,270.85 L243.4,270.6 L245.6,269.95 L247.8,269.11 L250,268.96 L252.2,269.03 L254.4,269.34 L256.6,269.9 L258.8,270.25 L261,269.82 L263.2,269.39 L265.4,270.51 L267.6,269.81 L269.8,269.77 L272,270.65 L274.2,270.37 L276.4,270.18 L278.6,270.54 L280.8,270.56 L283,270.48 L285.2,269.61 L287.4,269.57 L289.6,270.1 L291.8,270.51 L294,270.85 L296.2,270.29 L298.4,270.17 L300.6,270.67 L302.8,270.27 L305,269.88 L307.2,269.63 L309.4,269.66 L311.6,270.27 L313.8,270.87 L316,270.64 L318.2,270.58 L320.4,270.57 L322.6,270.15 L324.8,269.57 L327,269.68 L329.2,270.26 L331.4,270.03 L333.6,269.49 L335.8,269.21 L338,269.94 L340.2,270.34 L342.4,270.14 L344.6,270.04 L346.8,270.13 L349,270.31 L351.2,270.62 L353.4,270.25 L355.6,268.85 L357.8,269.23 L360,269.89 L362.2,270.22 L364.4,270.21 L366.6,270.14 L368.8,269.73 L371,269.31 L373.2,269.67 L375.4,270.34 L377.6,268.99 L379.8,268.98 L382,269.19 L384.2,269.42 L386.4,269.45 L388.6,268.93 L390.8,269.03 L393,269.19 L395.2,269.46 L397.4,269.88 L399.6,270.2 L401.8,270.45 L404,270.2 L406.2,269.94 L408.4,270.44 L410.6,270.58 L412.8,270.96 L415,272.5 L417.2,274.14 L419.4,275.01 L421.6,273.92 L423.8,273.46 L426,272.21 L428.2,268.64 L430.4,266.66 L432.6,267.27 L434.8,267.37 L437,266.73 L439.2,266.38 L441.4,266.04 L443.6,265.92 L445.8,265.95 L448,267.87 L450.2,269.8 L452.4,270.03 L454.6,270.27 L456.8,270.47 L459,270.63 L461.2,270.25 L463.4,268.79 L465.6,269.05 L467.8,269.09 L470,268.99 L472.2,269.42 L474.4,270.13 L476.6,269.31 L478.8,268.84 L481,268.74 L483.2,269.11 L485.4,269.93 L487.6,270.63 L489.8,270.67 L492,270.71 L494.2,270.7 L496.4,269.98 L498.6,269.26 L500.8,269.43 L503,269.89 L505.2,269.9 L507.4,269.37 L509.6,269.24 L511.8,269.54 L514,270.27 L516.2,270.22" stroke="#aac2cc" stroke-width="0.8" fill="none"/><path d="M24.75,198.25 V286.9" stroke="#ffffff" stroke-opacity="0.09" stroke-width="0.8"/><path d="M66.05,198.25 V286.9" stroke="#ffffff" stroke-opacity="0.09" stroke-width="0.8"/><path d="M107.35,198.25 V286.9" stroke="#ffffff" stroke-opacity="0.09" stroke-width="0.8"/><path d="M148.65,198.25 V286.9" stroke="#ffffff" stroke-opacity="0.09" stroke-width="0.8"/><path d="M189.95,198.25 V286.9" stroke="#ffffff" stroke-opacity="0.09" stroke-width="0.8"/><path d="M231.25,198.25 V286.9" stroke="#ffffff" stroke-opacity="0.09" stroke-width="0.8"/><path d="M272.55,198.25 V286.9" stroke="#ffffff" stroke-opacity="0.09" stroke-width="0.8"/><path d="M313.85,198.25 V286.9" stroke="#ffffff" stroke-opacity="0.09" stroke-width="0.8"/><path d="M355.15,198.25 V286.9" stroke="#ffffff" stroke-opacity="0.09" stroke-width="0.8"/><path d="M396.45,198.25 V286.9" stroke="#ffffff" stroke-opacity="0.09" stroke-width="0.8"/><path d="M437.75,198.25 V286.9" stroke="#ffffff" stroke-opacity="0.09" stroke-width="0.8"/><path d="M479.05,198.25 V286.9" stroke="#ffffff" stroke-opacity="0.09" stroke-width="0.8"/><path d="M23.4,257.35 H518.1" stroke="#ffffff" stroke-opacity="0.05" stroke-width="0.8"/><path d="M23.4,227.8 H518.1" stroke="#ffffff" stroke-opacity="0.05" stroke-width="0.8"/><path d="M23.4,198.25 H518.1" stroke="#ffffff" stroke-opacity="0.05" stroke-width="0.8"/><rect x="15" y="304.8" width="6.5" height="1.6" rx="0.8" fill="#c8f0f8"/><text x="28.3" y="307.6" font-size="5.95" fill="#c8c9d0" stroke="#c8c9d0" stroke-width="0.08" text-anchor="start" font-weight="normal" >web_server_01</text><rect x="77.1" y="304.8" width="6.2" height="1.6" rx="0.8" fill="#5ea8e8"/><text x="90.5" y="307.6" font-size="5.95" fill="#c8c9d0" stroke="#c8c9d0" stroke-width="0.08" text-anchor="start" font-weight="normal" >web_server_02</text><rect x="139.3" y="304.8" width="6.2" height="1.6" rx="0.8" fill="#3a8ee0"/><text x="152.7" y="307.6" font-size="5.95" fill="#c8c9d0" stroke="#c8c9d0" stroke-width="0.08" text-anchor="start" font-weight="normal" >web_server_03</text><rect x="204.2" y="304.8" width="6.2" height="1.6" rx="0.8" fill="#1f60a8"/><text x="215" y="307.6" font-size="5.95" fill="#c8c9d0" stroke="#c8c9d0" stroke-width="0.08" text-anchor="start" font-weight="normal" >web_server_04</text></svg>
<svg width="800" height="450" font-family="Liberation Sans"><text x="538.8" y="56.5" font-size="7.3" fill="#d8d9e0" stroke="#d8d9e0" stroke-width="0.22" text-anchor="start" font-weight="normal" >Memory</text><text x="670.8" y="56.5" font-size="7.3" fill="#d8d9e0" stroke="#d8d9e0" stroke-width="0.22" text-anchor="start" font-weight="normal" >Google hits</text><path d="M571.86,107.51 A28.6,28.6 0 1 1 625.94,107.51 L618.47,104.94 A20.7,20.7 0 1 0 579.33,104.94 Z" fill="#26272b"/><path d="M571.86,107.51 A28.6,28.6 0 0 1 587.28,72.07 L590.49,79.29 A20.7,20.7 0 0 0 579.33,104.94 Z" fill="#6bb960"/><path d="M569.97,108.16 A30.6,30.6 0 0 1 616.32,73.04" stroke="#5fae52" stroke-width="1.1" fill="none"/><path d="M616.32,73.04 A30.6,30.6 0 0 1 629.44,96.33" stroke="#e5862c" stroke-width="1.1" fill="none"/><path d="M629.44,96.33 A30.6,30.6 0 0 1 627.83,108.16" stroke="#d9363e" stroke-width="1.1" fill="none"/><text x="598.9" y="105.3" font-size="10.9" fill="#6cb95f" stroke="#6cb95f" stroke-width="0.35" text-anchor="middle" font-weight="normal" textLength="26.6" lengthAdjust="spacingAndGlyphs">114 B</text><path d="M705.67,105.99 A27,27 0 1 1 756.73,105.99 L749.64,103.55 A19.5,19.5 0 1 0 712.76,103.55 Z" fill="#26272b"/><path d="M705.67,105.99 A27,27 0 0 1 706.32,86.71 L713.23,89.63 A19.5,19.5 0 0 0 712.76,103.55 Z" fill="#6bb960"/><path d="M703.5,106.74 A29.3,29.3 0 0 1 747.88,73.11" stroke="#5fae52" stroke-width="1.1" fill="none"/><path d="M747.88,73.11 A29.3,29.3 0 0 1 760.45,95.41" stroke="#e5862c" stroke-width="1.1" fill="none"/><path d="M760.45,95.41 A29.3,29.3 0 0 1 758.9,106.74" stroke="#d9363e" stroke-width="1.1" fill="none"/><text x="731.2" y="105.6" font-size="13.4" fill="#6cb95f" stroke="#6cb95f" stroke-width="0.35" text-anchor="middle" font-weight="normal" textLength="22.8" lengthAdjust="spacingAndGlyphs">57.1</text><text x="538.8" y="129.2" font-size="7.3" fill="#d8d9e0" stroke="#d8d9e0" stroke-width="0.22" text-anchor="start" font-weight="normal" >Support calls</text><text x="670.8" y="129.2" font-size="7.3" fill="#d8d9e0" stroke="#d8d9e0" stroke-width="0.22" text-anchor="start" font-weight="normal" >Sign ups</text><path d="M535.81,157.89 L538.25,157.07 L541.1,159.51 L543.13,157.48 L544.35,152.2 L545.57,159.11 L547.2,157.48 L549.63,159.51 L552.07,157.07 L554.51,156.26 L556.14,159.92 L558.58,157.89 L559.39,159.51 L561.02,155.45 L563.46,161.54 L565.89,157.89 L567.52,159.51 L569.96,162.36 L572.4,158.29 L574.84,161.95 L577.28,158.29 L579.72,156.26 L583.78,157.07 L587.03,159.51 L589.47,157.48 L591.91,159.51 L595.16,158.7 L597.6,156.26 L600,157.07 L602.44,157.89 L607.32,158.7 L609.76,155.04 L614.63,157.48 L617.07,161.54 L620.33,163.98 L623.58,157.89 L625.2,161.14 L627.64,159.51 L630.49,168.46 L633.33,152.2 L635.77,153.82 L637.4,157.07 L639.02,155.04 L640.65,159.51 L641.87,156.67 L643.9,159.51 L646.34,159.92 L648.78,159.11 L650.41,159.51 L652.03,160.33 L654.47,157.48 L656.1,162.76 L658.54,159.11 L661.79,160.73 L661.79,169 L535.81,169 Z" fill="#4a2427"/><path d="M535.81,157.89 L538.25,157.07 L541.1,159.51 L543.13,157.48 L544.35,152.2 L545.57,159.11 L547.2,157.48 L549.63,159.51 L552.07,157.07 L554.51,156.26 L556.14,159.92 L558.58,157.89 L559.39,159.51 L561.02,155.45 L563.46,161.54 L565.89,157.89 L567.52,159.51 L569.96,162.36 L572.4,158.29 L574.84,161.95 L577.28,158.29 L579.72,156.26 L583.78,157.07 L587.03,159.51 L589.47,157.48 L591.91,159.51 L595.16,158.7 L597.6,156.26 L600,157.07 L602.44,157.89 L607.32,158.7 L609.76,155.04 L614.63,157.48 L617.07,161.54 L620.33,163.98 L623.58,157.89 L625.2,161.14 L627.64,159.51 L630.49,168.46 L633.33,152.2 L635.77,153.82 L637.4,157.07 L639.02,155.04 L640.65,159.51 L641.87,156.67 L643.9,159.51 L646.34,159.92 L648.78,159.11 L650.41,159.51 L652.03,160.33 L654.47,157.48 L656.1,162.76 L658.54,159.11 L661.79,160.73" stroke="#d8383a" stroke-width="0.9" fill="none"/><path d="M667.81,162.36 L670.66,159.11 L673.5,161.54 L676.35,157.07 L678.38,157.89 L680.01,157.07 L682.45,159.51 L684.89,163.98 L687.33,159.11 L689.76,161.95 L693.02,156.67 L695.46,161.54 L697.89,161.95 L699.52,159.92 L702.77,163.17 L704.8,158.29 L706.43,163.58 L711.31,155.45 L713.34,159.51 L714.97,157.48 L717.41,158.29 L720.66,162.36 L723.1,159.51 L725.54,160.73 L728.79,159.51 L732,159.11 L734.44,160.73 L737.28,156.67 L739.32,159.51 L741.76,158.29 L745.01,160.33 L747.45,158.29 L749.48,160.33 L751.51,159.92 L753.14,163.17 L756.39,159.51 L757.2,159.51 L759.64,161.95 L761.67,168.46 L764.52,166.83 L766.96,152.2 L769.4,155.85 L771.43,155.85 L772.65,162.36 L775.09,161.14 L778.34,159.92 L781.59,162.36 L784.03,160.33 L786.47,158.7 L788.1,163.58 L790.54,160.33 L792.57,161.95 L793.79,159.92 L793.79,169 L667.81,169 Z" fill="#223d26"/><path d="M667.81,162.36 L670.66,159.11 L673.5,161.54 L676.35,157.07 L678.38,157.89 L680.01,157.07 L682.45,159.51 L684.89,163.98 L687.33,159.11 L689.76,161.95 L693.02,156.67 L695.46,161.54 L697.89,161.95 L699.52,159.92 L702.77,163.17 L704.8,158.29 L706.43,163.58 L711.31,155.45 L713.34,159.51 L714.97,157.48 L717.41,158.29 L720.66,162.36 L723.1,159.51 L725.54,160.73 L728.79,159.51 L732,159.11 L734.44,160.73 L737.28,156.67 L739.32,159.51 L741.76,158.29 L745.01,160.33 L747.45,158.29 L749.48,160.33 L751.51,159.92 L753.14,163.17 L756.39,159.51 L757.2,159.51 L759.64,161.95 L761.67,168.46 L764.52,166.83 L766.96,152.2 L769.4,155.85 L771.43,155.85 L772.65,162.36 L775.09,161.14 L778.34,159.92 L781.59,162.36 L784.03,160.33 L786.47,158.7 L788.1,163.58 L790.54,160.33 L792.57,161.95 L793.79,159.92" stroke="#3aa73c" stroke-width="0.9" fill="none"/><text x="598.8" y="156.1" font-size="11.2" fill="#f0443f" stroke="#f0443f" stroke-width="0.35" text-anchor="middle" font-weight="normal" textLength="23.6" lengthAdjust="spacingAndGlyphs">84.9</text><text x="731.2" y="156.3" font-size="11.2" fill="#4fc049" stroke="#4fc049" stroke-width="0.35" text-anchor="middle" font-weight="normal" textLength="20.3" lengthAdjust="spacingAndGlyphs">283</text><text x="538.8" y="184.1" font-size="7.3" fill="#d8d9e0" stroke="#d8d9e0" stroke-width="0.22" text-anchor="start" font-weight="normal" >Google hits</text><rect x="539.1" y="206.4" width="46.6" height="93.9" fill="#222327"/><rect x="539.1" y="299.2" width="46.6" height="1.1" fill="#2d4a72"/><rect x="539.1" y="298.9" width="46.6" height="1.7" fill="#5794f2"/><text x="562.4" y="203.2" font-size="12.6" fill="#5794f2" stroke="#5794f2" stroke-width="0.3" text-anchor="middle" font-weight="normal" >0.400</text><text x="562.4" y="308.2" font-size="6.8" fill="#c8c9d0" stroke="#c8c9d0" stroke-width="0.08" text-anchor="middle" font-weight="normal" textLength="27" lengthAdjust="spacingAndGlyphs">A-series</text><rect x="590" y="206.4" width="47" height="93.9" fill="#222327"/><rect x="590" y="274" width="47" height="26.3" fill="#2d4a72"/><rect x="590" y="273.7" width="47" height="1.7" fill="#5794f2"/><text x="613.5" y="203.2" font-size="12.6" fill="#5794f2" stroke="#5794f2" stroke-width="0.3" text-anchor="middle" font-weight="normal" >27.7</text><text x="613.5" y="308.2" font-size="6.8" fill="#c8c9d0" stroke="#c8c9d0" stroke-width="0.08" text-anchor="middle" font-weight="normal" textLength="27" lengthAdjust="spacingAndGlyphs">B-series</text><rect x="641.7" y="206.4" width="46.3" height="93.9" fill="#222327"/><rect x="641.7" y="264.8" width="46.3" height="35.5" fill="#2d4a72"/><rect x="641.7" y="264.5" width="46.3" height="1.7" fill="#5794f2"/><text x="664.85" y="203.2" font-size="12.6" fill="#5794f2" stroke="#5794f2" stroke-width="0.3" text-anchor="middle" font-weight="normal" >37.1</text><text x="664.85" y="308.2" font-size="6.8" fill="#c8c9d0" stroke="#c8c9d0" stroke-width="0.08" text-anchor="middle" font-weight="normal" textLength="27" lengthAdjust="spacingAndGlyphs">C-series</text><rect x="693" y="206.4" width="46.6" height="93.9" fill="#222327"/><rect x="693" y="236.1" width="46.6" height="64.2" fill="#523e66"/><rect x="693" y="235.8" width="46.6" height="1.7" fill="#b877d9"/><text x="716.3" y="203.2" font-size="12.6" fill="#b877d9" stroke="#b877d9" stroke-width="0.3" text-anchor="middle" font-weight="normal" >66.5</text><text x="716.3" y="308.2" font-size="6.8" fill="#c8c9d0" stroke="#c8c9d0" stroke-width="0.08" text-anchor="middle" font-weight="normal" textLength="27" lengthAdjust="spacingAndGlyphs">D-series</text><rect x="744.3" y="206.4" width="46.6" height="93.9" fill="#222327"/><rect x="744.3" y="280" width="46.6" height="20.3" fill="#2d4a72"/><rect x="744.3" y="279.7" width="46.6" height="1.7" fill="#5794f2"/><text x="767.6" y="203.2" font-size="12.6" fill="#5794f2" stroke="#5794f2" stroke-width="0.3" text-anchor="middle" font-weight="normal" >21.2</text><text x="767.6" y="308.2" font-size="6.8" fill="#c8c9d0" stroke="#c8c9d0" stroke-width="0.08" text-anchor="middle" font-weight="normal" textLength="27" lengthAdjust="spacingAndGlyphs">E-series</text></svg>
<svg width="800" height="450" font-family="Liberation Sans"><text x="400" y="329.7" font-size="7.3" fill="#d8d9e0" stroke="#d8d9e0" stroke-width="0.22" text-anchor="middle" font-weight="normal" >client side full page load</text><path d="M27.5,427.2 H708.5" stroke="#2b2d32" stroke-width="0.8"/><text x="23.3" y="429.3" font-size="6" fill="#bfc0c7" stroke="#bfc0c7" stroke-width="0.08" text-anchor="end" font-weight="normal" >0 ms</text><path d="M27.5,410.48 H708.5" stroke="#2b2d32" stroke-width="0.8"/><text x="23.3" y="412.58" font-size="6" fill="#bfc0c7" stroke="#bfc0c7" stroke-width="0.08" text-anchor="end" font-weight="normal" >1 s</text><path d="M27.5,393.76 H708.5" stroke="#2b2d32" stroke-width="0.8"/><text x="23.3" y="395.86" font-size="6" fill="#bfc0c7" stroke="#bfc0c7" stroke-width="0.08" text-anchor="end" font-weight="normal" >2 s</text><path d="M27.5,377.04 H708.5" stroke="#2b2d32" stroke-width="0.8"/><text x="23.3" y="379.14" font-size="6" fill="#bfc0c7" stroke="#bfc0c7" stroke-width="0.08" text-anchor="end" font-weight="normal" >3 s</text><path d="M27.5,360.32 H708.5" stroke="#2b2d32" stroke-width="0.8"/><text x="23.3" y="362.42" font-size="6" fill="#bfc0c7" stroke="#bfc0c7" stroke-width="0.08" text-anchor="end" font-weight="normal" >4 s</text><path d="M27.5,343.6 H708.5" stroke="#2b2d32" stroke-width="0.8"/><text x="23.3" y="345.7" font-size="6" fill="#bfc0c7" stroke="#bfc0c7" stroke-width="0.08" text-anchor="end" font-weight="normal" >5 s</text><path d="M28.7,343.6 V427.2" stroke="#2b2d32" stroke-width="0.8"/><text x="28.7" y="436.1" font-size="6" fill="#bfc0c7" stroke="#bfc0c7" stroke-width="0.08" text-anchor="middle" font-weight="normal" >16:50</text><path d="M85.6,343.6 V427.2" stroke="#2b2d32" stroke-width="0.8"/><text x="85.6" y="436.1" font-size="6" fill="#bfc0c7" stroke="#bfc0c7" stroke-width="0.08" text-anchor="middle" font-weight="normal" >16:55</text><path d="M142.5,343.6 V427.2" stroke="#2b2d32" stroke-width="0.8"/><text x="142.5" y="436.1" font-size="6" fill="#bfc0c7" stroke="#bfc0c7" stroke-width="0.08" text-anchor="middle" font-weight="normal" >17:00</text><path d="M199.4,343.6 V427.2" stroke="#2b2d32" stroke-width="0.8"/><text x="199.4" y="436.1" font-size="6" fill="#bfc0c7" stroke="#bfc0c7" stroke-width="0.08" text-anchor="middle" font-weight="normal" >17:05</text><path d="M256.3,343.6 V427.2" stroke="#2b2d32" stroke-width="0.8"/><text x="256.3" y="436.1" font-size="6" fill="#bfc0c7" stroke="#bfc0c7" stroke-width="0.08" text-anchor="middle" font-weight="normal" >17:10</text><path d="M313.2,343.6 V427.2" stroke="#2b2d32" stroke-width="0.8"/><text x="313.2" y="436.1" font-size="6" fill="#bfc0c7" stroke="#bfc0c7" stroke-width="0.08" text-anchor="middle" font-weight="normal" >17:15</text><path d="M370.1,343.6 V427.2" stroke="#2b2d32" stroke-width="0.8"/><text x="370.1" y="436.1" font-size="6" fill="#bfc0c7" stroke="#bfc0c7" stroke-width="0.08" text-anchor="middle" font-weight="normal" >17:20</text><path d="M427,343.6 V427.2" stroke="#2b2d32" stroke-width="0.8"/><text x="427" y="436.1" font-size="6" fill="#bfc0c7" stroke="#bfc0c7" stroke-width="0.08" text-anchor="middle" font-weight="normal" >17:25</text><path d="M483.9,343.6 V427.2" stroke="#2b2d32" stroke-width="0.8"/><text x="483.9" y="436.1" font-size="6" fill="#bfc0c7" stroke="#bfc0c7" stroke-width="0.08" text-anchor="middle" font-weight="normal" >17:30</text><path d="M540.8,343.6 V427.2" stroke="#2b2d32" stroke-width="0.8"/><text x="540.8" y="436.1" font-size="6" fill="#bfc0c7" stroke="#bfc0c7" stroke-width="0.08" text-anchor="middle" font-weight="normal" >17:35</text><path d="M597.7,343.6 V427.2" stroke="#2b2d32" stroke-width="0.8"/><text x="597.7" y="436.1" font-size="6" fill="#bfc0c7" stroke="#bfc0c7" stroke-width="0.08" text-anchor="middle" font-weight="normal" >17:40</text><path d="M654.6,343.6 V427.2" stroke="#2b2d32" stroke-width="0.8"/><text x="654.6" y="436.1" font-size="6" fill="#bfc0c7" stroke="#bfc0c7" stroke-width="0.08" text-anchor="middle" font-weight="normal" >17:45</text><rect x="26.3" y="370.9" width="10.5" height="56.3" fill="#e04f43"/><rect x="26.3" y="399" width="10.5" height="28.2" fill="#ee8739"/><rect x="26.3" y="416.2" width="10.5" height="11" fill="#ebba3a"/><rect x="26.3" y="426.3" width="10.5" height="0.9" fill="#f2d48a"/><rect x="51.5" y="391.7" width="30.5" height="35.5" fill="#e04f43"/><rect x="51.5" y="406.6" width="30.5" height="20.6" fill="#ee8739"/><rect x="51.5" y="419.4" width="30.5" height="7.8" fill="#ebba3a"/><rect x="51.5" y="426.4" width="30.5" height="0.8" fill="#f2d48a"/><rect x="96.96" y="374.5" width="30.5" height="52.7" fill="#e04f43"/><rect x="96.96" y="399" width="30.5" height="28.2" fill="#ee8739"/><rect x="96.96" y="416" width="30.5" height="11.2" fill="#ebba3a"/><rect x="96.96" y="426.3" width="30.5" height="0.9" fill="#f2d48a"/><rect x="142.42" y="375.5" width="30.5" height="51.7" fill="#e04f43"/><rect x="142.42" y="399.5" width="30.5" height="27.7" fill="#ee8739"/><rect x="142.42" y="417" width="30.5" height="10.2" fill="#ebba3a"/><rect x="142.42" y="426.3" width="30.5" height="0.9" fill="#f2d48a"/><rect x="187.88" y="379.5" width="30.5" height="47.7" fill="#e04f43"/><rect x="187.88" y="402" width="30.5" height="25.2" fill="#ee8739"/><rect x="187.88" y="418" width="30.5" height="9.2" fill="#ebba3a"/><rect x="187.88" y="426.4" width="30.5" height="0.8" fill="#f2d48a"/><rect x="233.34" y="381" width="30.5" height="46.2" fill="#e04f43"/><rect x="233.34" y="400.5" width="30.5" height="26.7" fill="#ee8739"/><rect x="233.34" y="417" width="30.5" height="10.2" fill="#ebba3a"/><rect x="233.34" y="426.3" width="30.5" height="0.9" fill="#f2d48a"/><rect x="278.8" y="381" width="30.5" height="46.2" fill="#e04f43"/><rect x="278.8" y="403.5" width="30.5" height="23.7" fill="#ee8739"/><rect x="278.8" y="417.5" width="30.5" height="9.7" fill="#ebba3a"/><rect x="278.8" y="426.4" width="30.5" height="0.8" fill="#f2d48a"/><rect x="324.26" y="375" width="30.5" height="52.2" fill="#e04f43"/><rect x="324.26" y="397.5" width="30.5" height="29.7" fill="#ee8739"/><rect x="324.26" y="415.5" width="30.5" height="11.7" fill="#ebba3a"/><rect x="324.26" y="426.2" width="30.5" height="1" fill="#f2d48a"/><rect x="369.72" y="361" width="30.5" height="66.2" fill="#e04f43"/><rect x="369.72" y="392" width="30.5" height="35.2" fill="#ee8739"/><rect x="369.72" y="414" width="30.5" height="13.2" fill="#ebba3a"/><rect x="369.72" y="423.6" width="30.5" height="3.6" fill="#f2d48a"/><rect x="415.18" y="379" width="30.5" height="48.2" fill="#e04f43"/><rect x="415.18" y="399.6" width="30.5" height="27.6" fill="#ee8739"/><rect x="415.18" y="415" width="30.5" height="12.2" fill="#ebba3a"/><rect x="415.18" y="424.4" width="30.5" height="2.8" fill="#f2d48a"/><rect x="460.64" y="361" width="30.5" height="66.2" fill="#e04f43"/><rect x="460.64" y="390" width="30.5" height="37.2" fill="#ee8739"/><rect x="460.64" y="412" width="30.5" height="15.2" fill="#ebba3a"/><rect x="460.64" y="422.6" width="30.5" height="4.6" fill="#f2d48a"/><rect x="506.1" y="374" width="30.5" height="53.2" fill="#e04f43"/><rect x="506.1" y="398.5" width="30.5" height="28.7" fill="#ee8739"/><rect x="506.1" y="416.5" width="30.5" height="10.7" fill="#ebba3a"/><rect x="506.1" y="426.2" width="30.5" height="1" fill="#f2d48a"/><rect x="551.56" y="363" width="30.5" height="64.2" fill="#e04f43"/><rect x="551.56" y="394.5" width="30.5" height="32.7" fill="#ee8739"/><rect x="551.56" y="414" width="30.5" height="13.2" fill="#ebba3a"/><rect x="551.56" y="424" width="30.5" height="3.2" fill="#f2d48a"/><rect x="597.02" y="371.5" width="30.5" height="55.7" fill="#e04f43"/><rect x="597.02" y="394.5" width="30.5" height="32.7" fill="#ee8739"/><rect x="597.02" y="412.5" width="30.5" height="14.7" fill="#ebba3a"/><rect x="597.02" y="426" width="30.5" height="1.2" fill="#f2d48a"/><rect x="642.48" y="362" width="30.5" height="65.2" fill="#e04f43"/><rect x="642.48" y="390.5" width="30.5" height="36.7" fill="#ee8739"/><rect x="642.48" y="410" width="30.5" height="17.2" fill="#ebba3a"/><rect x="642.48" y="422.5" width="30.5" height="4.7" fill="#f2d48a"/><rect x="687.94" y="379.5" width="20.56" height="47.7" fill="#e04f43"/><rect x="687.94" y="402.5" width="20.56" height="24.7" fill="#ee8739"/><rect x="687.94" y="418.5" width="20.56" height="8.7" fill="#ebba3a"/><rect x="687.94" y="426.4" width="20.56" height="0.8" fill="#f2d48a"/><text x="778.7" y="349" font-size="6.8" fill="#3d92e0" stroke="#3d92e0" stroke-width="0.2" text-anchor="middle" font-weight="normal" >avg</text><rect x="719.5" y="356.8" width="7" height="1.8" rx="0.9" fill="#fbe0d4"/><text x="731.2" y="359.9" font-size="6.3" fill="#c8c9d0" stroke="#c8c9d0" stroke-width="0.08" text-anchor="start" font-weight="normal" >upper_25</text><text x="787.5" y="359.9" font-size="6.3" fill="#c8c9d0" stroke="#c8c9d0" stroke-width="0.08" text-anchor="end" font-weight="normal" >6.81 ms</text><rect x="718.9" y="364.15" width="69.6" height="12.7" fill="#202226"/><rect x="719.5" y="369.65" width="7" height="1.8" rx="0.9" fill="#f5cf70"/><text x="731.2" y="372.75" font-size="6.3" fill="#c8c9d0" stroke="#c8c9d0" stroke-width="0.08" text-anchor="start" font-weight="normal" >upper_50</text><text x="787.5" y="372.75" font-size="6.3" fill="#c8c9d0" stroke="#c8c9d0" stroke-width="0.08" text-anchor="end" font-weight="normal" >142 ms</text><rect x="719.5" y="382.5" width="7" height="1.8" rx="0.9" fill="#efbf30"/><text x="731.2" y="385.6" font-size="6.3" fill="#c8c9d0" stroke="#c8c9d0" stroke-width="0.08" text-anchor="start" font-weight="normal" >upper_75</text><text x="787.5" y="385.6" font-size="6.3" fill="#c8c9d0" stroke="#c8c9d0" stroke-width="0.08" text-anchor="end" font-weight="normal" >535 ms</text><rect x="718.9" y="389.85" width="69.6" height="12.7" fill="#202226"/><rect x="719.5" y="395.35" width="7" height="1.8" rx="0.9" fill="#ee8739"/><text x="731.2" y="398.45" font-size="6.3" fill="#c8c9d0" stroke="#c8c9d0" stroke-width="0.08" text-anchor="start" font-weight="normal" >upper_90</text><text x="787.5" y="398.45" font-size="6.3" fill="#c8c9d0" stroke="#c8c9d0" stroke-width="0.08" text-anchor="end" font-weight="normal" >1.04 s</text><rect x="719.5" y="408.2" width="7" height="1.8" rx="0.9" fill="#e04f43"/><text x="731.2" y="411.3" font-size="6.3" fill="#c8c9d0" stroke="#c8c9d0" stroke-width="0.08" text-anchor="start" font-weight="normal" >upper_95</text><text x="787.5" y="411.3" font-size="6.3" fill="#c8c9d0" stroke="#c8c9d0" stroke-width="0.08" text-anchor="end" font-weight="normal" >1.46 s</text></svg></body></html>
